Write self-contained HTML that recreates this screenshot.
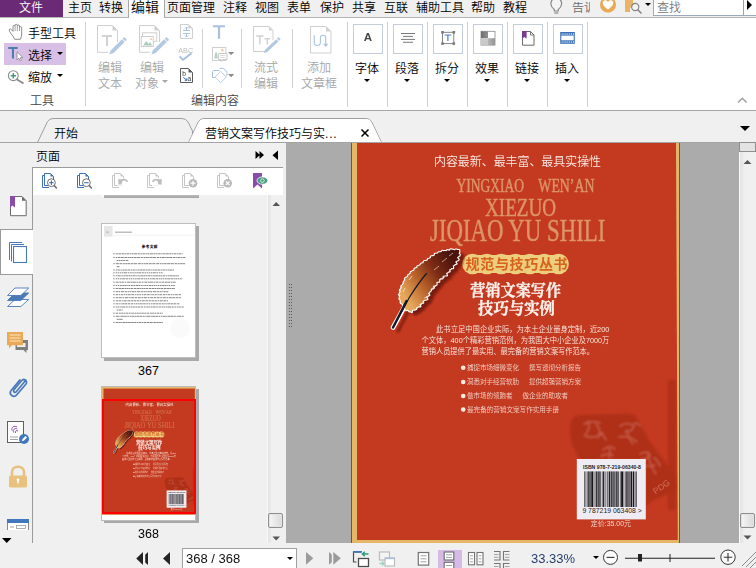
<!DOCTYPE html>
<html lang="zh-CN"><head><meta charset="utf-8"><title>营销文案写作技巧与实例</title>
<style>
*{box-sizing:border-box;margin:0;padding:0}
html,body{width:756px;height:568px;overflow:hidden}
body{position:relative;background:#f0f0f0;font-family:"Liberation Sans","Noto Sans CJK SC",sans-serif;font-size:12px;color:#000;line-height:1;font-weight:350}
.a{position:absolute}
.t{position:absolute;white-space:nowrap;line-height:12px;height:12px}
.g{color:#a6a6a6}
svg{position:absolute;overflow:visible}
.vs{position:absolute;width:1px;background:#d0d0d0}
.box{position:absolute;width:30px;height:30px;top:24px;border:1px solid #c3ced9;background:#fff}
.arr{position:absolute;width:0;height:0;border-left:3px solid transparent;border-right:3px solid transparent;border-top:3px solid #000}
</style></head><body>

<!-- ================= MENU BAR ================= -->
<div id="menubar" class="a" style="left:0;top:0;width:756px;height:17px;background:#f0f0f0"></div>
<div class="a" style="left:0;top:17px;width:756px;height:1px;background:#b4b4b4"></div>
<div class="a" style="left:0;top:0;width:63px;height:17px;background:#6b2a75"></div>
<div class="t" style="left:19px;top:2px;color:#fff">文件</div>
<div class="t" style="left:68px;top:2px">主页</div>
<div class="t" style="left:99px;top:2px">转换</div>
<div class="a" style="left:128px;top:-2px;width:37px;height:21px;background:#fff;border:1px solid #a8a8a8;border-bottom:none"></div>
<div class="t" style="left:131px;top:0px;font-size:14px;line-height:14px;height:14px">编辑</div>
<div class="t" style="left:167px;top:2px">页面管理</div>
<div class="t" style="left:223px;top:2px">注释</div>
<div class="t" style="left:255px;top:2px">视图</div>
<div class="t" style="left:287px;top:2px">表单</div>
<div class="t" style="left:320px;top:2px">保护</div>
<div class="t" style="left:352px;top:2px">共享</div>
<div class="t" style="left:384px;top:2px">互联</div>
<div class="t" style="left:416px;top:2px">辅助工具</div>
<div class="t" style="left:471px;top:2px">帮助</div>
<div class="t" style="left:503px;top:2px">教程</div>
<div class="t" style="left:572px;top:2px;color:#6a6a6a;width:18px;overflow:hidden">告诉</div>
<!-- search -->
<div class="a" style="left:653px;top:-1px;width:104px;height:17px;background:#fff;border:1px solid #9aa9bb"></div>
<div class="a" style="left:743px;top:0;width:1px;height:15px;background:#8fa3bb"></div>
<div class="t" style="left:657px;top:2px;color:#767676">查找</div>
<div class="a" style="left:747px;top:0;width:0;height:0;border-top:5px solid transparent;border-bottom:5px solid transparent;border-left:5px solid #000"></div>
<div class="arr" style="left:645px;top:3px"></div>
<!--ICONS_MENU-->

<!-- ================= RIBBON ================= -->
<div id="ribbon" class="a" style="left:0;top:18px;width:756px;height:92px;background:#fff"></div>
<div class="a" style="left:0;top:110px;width:756px;height:1px;background:#a6a6a6"></div>
<div class="a" style="left:129px;top:17px;width:35px;height:2px;background:#fff"></div>

<div class="t" style="left:28px;top:28px">手型工具</div>
<div class="a" style="left:4px;top:43px;width:62px;height:21.500px;background:#d8bfe6"></div>
<div class="t" style="left:28px;top:50px">选择</div>
<div class="arr" style="left:57px;top:52px"></div>
<div class="t" style="left:28px;top:72px">缩放</div>
<div class="arr" style="left:57px;top:74px"></div>
<div class="t" style="left:30px;top:95px;color:#444">工具</div>
<div class="vs" style="left:85px;top:22px;height:84px"></div>

<div class="t g" style="left:98px;top:62px">编辑</div>
<div class="t g" style="left:98px;top:78px">文本</div>
<div class="t g" style="left:140px;top:62px">编辑</div>
<div class="t g" style="left:135px;top:78px">对象</div>
<div class="arr" style="left:162px;top:80px;border-top-color:#a6a6a6"></div>
<div class="vs" style="left:202px;top:29px;height:59px"></div>
<div class="arr" style="left:228px;top:52px;border-top-color:#8c8c8c"></div>
<div class="arr" style="left:228px;top:74px;border-top-color:#8c8c8c"></div>
<div class="vs" style="left:241px;top:29px;height:59px"></div>
<div class="t g" style="left:254px;top:62px">流式</div>
<div class="t g" style="left:254px;top:78px">编辑</div>
<div class="vs" style="left:292px;top:29px;height:59px"></div>
<div class="t g" style="left:307px;top:62px">添加</div>
<div class="t g" style="left:301px;top:78px">文章框</div>
<div class="t" style="left:191px;top:95px;color:#444">编辑内容</div>
<div class="vs" style="left:347px;top:22px;height:85px"></div>

<div class="box" style="left:353px"></div>
<div class="t" style="left:355px;top:63px">字体</div>
<div class="arr" style="left:364px;top:79px"></div>
<div class="vs" style="left:387px;top:22px;height:85px"></div>
<div class="box" style="left:393px"></div>
<div class="t" style="left:395px;top:63px">段落</div>
<div class="arr" style="left:404px;top:79px"></div>
<div class="vs" style="left:427px;top:22px;height:85px"></div>
<div class="box" style="left:433px"></div>
<div class="t" style="left:435px;top:63px">拆分</div>
<div class="arr" style="left:444px;top:79px"></div>
<div class="vs" style="left:467px;top:22px;height:85px"></div>
<div class="box" style="left:473px"></div>
<div class="t" style="left:475px;top:63px">效果</div>
<div class="arr" style="left:484px;top:79px"></div>
<div class="vs" style="left:507px;top:22px;height:85px"></div>
<div class="box" style="left:513px"></div>
<div class="t" style="left:515px;top:63px">链接</div>
<div class="arr" style="left:524px;top:79px"></div>
<div class="vs" style="left:547px;top:22px;height:85px"></div>
<div class="box" style="left:553px"></div>
<div class="t" style="left:555px;top:63px">插入</div>
<div class="arr" style="left:564px;top:79px"></div>
<div class="vs" style="left:587px;top:22px;height:85px"></div>
<!--ICONS_RIBBON-->

<!-- ================= TAB BAR ================= -->

<svg class="a" style="left:0;top:111px" width="756" height="32" viewBox="0 111 756 32">
  <path d="M37.5 142.5 L47.5 121.5 Q49.5 118.500 53 118.500 L182 118.500 Q186 118.500 188 122 L192.500 131 L192.500 142.500 Z" fill="#f0f0f0" stroke="#9e9e9e" stroke-width="1"/>
  <path d="M0 142.500 L188.500 142.500 L198.500 121.500 Q200.500 118.500 204 118.500 L366 118.500 Q370 118.500 371.500 121.500 L381.500 142.500 L756 142.500" fill="none" stroke="#9e9e9e" stroke-width="1"/>
  <path d="M189 142 L199 121.800 Q200.800 119 204 119 L366 119 Q369.500 119 371 121.800 L381 142 Z" fill="#fff"/><path d="M0 142.500 L756 142.500" stroke="#a4a4a4" stroke-width="1" fill="none"/>
  <path d="M361.500 129.500 L368.500 136.500 M368.500 129.500 L361.500 136.500" stroke="#000" stroke-width="1.500" fill="none"/>
  <path d="M740 126 L750 126 L745 131 Z" fill="#000"/>
</svg>
<div class="t" style="left:54px;top:128px">开始</div>
<div class="t" style="left:205px;top:128px">营销文案写作技巧与实<span style="letter-spacing:0.800px">...</span></div>


<!-- ================= LEFT PANEL ================= -->

<div class="a" style="left:0;top:143px;width:286px;height:400px;background:#f0f0f0"></div>
<div class="t" style="left:36px;top:151px">页面</div>
<svg style="left:254px;top:150px" width="26" height="11" viewBox="254 150 26 11"><path d="M255.500 151 L260 155 L255.500 159 Z M259.500 151 L264 155 L259.500 159 Z M278 150.500 L278 160 L272.500 155.200 Z" fill="#000"/></svg>
<!-- toolbar -->
<div class="a" style="left:32px;top:167px;width:251px;height:28px;background:#fff;border-top:1px solid #9b9b9b"></div>
<div class="a" style="left:32px;top:167px;width:1px;height:376px;background:#9b9b9b"></div>
<!-- selected side tab -->
<div class="a" style="left:0;top:229px;width:33px;height:46px;background:#fff;border:1px solid #9b9b9b;border-right:none"></div>
<!-- thumbs scrollbar -->
<div class="a" style="left:267px;top:195px;width:16px;height:348px;background:linear-gradient(90deg,#f9f9f9 0,#f9f9f9 1px,#e4e4e4 1.500px,#f0f0f0 5px,#f0f0f0)"></div>
<svg style="left:268px;top:195px" width="15" height="347" viewBox="268 195 15 347">
  <path d="M272.500 206 L276.200 202 L280 206 Z" fill="#555"/>
  <path d="M272.500 536.500 L280 536.500 L276.200 540.500 Z" fill="#555"/>
  <rect x="268.500" y="513.500" width="14" height="14" rx="1.500" fill="#e4e4e4" stroke="#8e8e8e"/>
</svg>
<div class="a" style="left:270px;top:515px;width:11px;height:11px;background:linear-gradient(90deg,#f4f4f4,#dcdcdc)"></div>
<!-- prev thumb bottom shadow -->
<div class="a" style="left:104px;top:195px;width:95px;height:2.800px;background:linear-gradient(#bdbdbd,#a2a2a2)"></div><div class="a" style="left:102px;top:195px;width:2px;height:1.500px;background:#fafafa"></div>
<!-- thumb 367 -->
<div class="a" style="left:104px;top:226px;width:95px;height:135px;background:#a9a9a9"></div>
<div id="th367" class="a" style="left:101px;top:223px;width:95px;height:135px;background:#fff;border:1px solid #bdbdbd;overflow:hidden">
<svg style="left:0;top:0" width="95" height="135" viewBox="102 224 95 135" font-family="Liberation Sans,Noto Sans CJK SC,sans-serif">
<defs><filter id="tbl"><feGaussianBlur stdDeviation="0.3"/></filter></defs>
<rect x="104" y="226" width="8.500" height="10.700" fill="#e6e6e6"/>
<rect x="106" y="231.500" width="3" height="1.300" fill="#bdbdbd"/>
<rect x="115" y="231.600" width="17" height="1.200" fill="#b0b0b0"/>
<rect x="113" y="234.800" width="82" height="0.600" fill="#e8e8e8"/>
<g transform="translate(141.700 247.700) scale(0.25)"><text x="0" y="0" font-family="Liberation Sans,Noto Sans CJK SC,sans-serif" font-weight="900" font-size="14.500" textLength="63.200" lengthAdjust="spacing" fill="#111">参考文献</text></g>
<g filter="url(#tbl)">
<rect x="113.3" y="253.2" width="1.300" height="1.100" fill="#888"/>
<path d="M115.7 253.80 L182.5 253.80" stroke="#868686" stroke-width="1" stroke-dasharray="2.1 0.5 3.0 0.5 2.2 0.5 1.6 0.5 2.5 0.6 1.4 0.4" fill="none"/>
<rect x="113.3" y="256.9" width="1.300" height="1.100" fill="#888"/>
<path d="M115.7 257.50 L185.8 257.50" stroke="#868686" stroke-width="1" stroke-dasharray="1.4 0.6 2.6 0.3 3.2 0.7 2.5 0.5 1.5 0.3 2.3 0.3" fill="none"/>
<path d="M116.7 260.50 L129.0 260.50" stroke="#868686" stroke-width="1" stroke-dasharray="1.6 0.4 1.3 0.5 2.1 0.6 2.2 0.6 2.2 0.6 2.1 0.4" fill="none"/>
<rect x="113.3" y="263.1" width="1.300" height="1.100" fill="#888"/>
<path d="M115.7 263.70 L185.0 263.70" stroke="#868686" stroke-width="1" stroke-dasharray="3.2 0.7 2.9 0.6 1.8 0.4 1.8 0.3 2.7 0.5 2.9 0.5" fill="none"/>
<path d="M116.7 266.70 L119.5 266.70" stroke="#868686" stroke-width="1" stroke-dasharray="3.1 0.6 1.2 0.4 3.0 0.5 3.2 0.5 1.3 0.6 2.8 0.4" fill="none"/>
<rect x="113.3" y="269.4" width="1.300" height="1.100" fill="#888"/>
<path d="M115.7 270.00 L174.0 270.00" stroke="#868686" stroke-width="1" stroke-dasharray="1.4 0.4 3.1 0.6 1.4 0.4 1.4 0.3 2.8 0.4 2.3 0.5" fill="none"/>
<rect x="113.3" y="272.2" width="1.300" height="1.100" fill="#888"/>
<path d="M115.7 272.80 L163.0 272.80" stroke="#868686" stroke-width="1" stroke-dasharray="1.6 0.6 1.5 0.6 1.4 0.5 1.6 0.4 3.1 0.6 1.8 0.7" fill="none"/>
<rect x="113.3" y="275.2" width="1.300" height="1.100" fill="#888"/>
<path d="M115.7 275.80 L179.0 275.80" stroke="#868686" stroke-width="1" stroke-dasharray="1.6 0.5 2.9 0.6 1.4 0.7 1.6 0.4 2.7 0.4 1.8 0.3" fill="none"/>
<rect x="113.3" y="278.2" width="1.300" height="1.100" fill="#888"/>
<path d="M115.7 278.80 L182.5 278.80" stroke="#868686" stroke-width="1" stroke-dasharray="1.4 0.5 1.7 0.5 1.9 0.5 3.1 0.5 2.3 0.6 1.6 0.4" fill="none"/>
<rect x="113.3" y="281.6" width="1.300" height="1.100" fill="#888"/>
<path d="M115.7 282.20 L176.0 282.20" stroke="#868686" stroke-width="1" stroke-dasharray="3.0 0.6 1.7 0.4 2.7 0.7 1.6 0.7 3.0 0.5 2.0 0.3" fill="none"/>
<rect x="113.3" y="284.9" width="1.300" height="1.100" fill="#888"/>
<path d="M115.7 285.50 L175.0 285.50" stroke="#868686" stroke-width="1" stroke-dasharray="1.3 0.7 1.7 0.6 1.7 0.6 2.4 0.4 1.6 0.6 1.3 0.4" fill="none"/>
<rect x="113.3" y="287.9" width="1.300" height="1.100" fill="#888"/>
<path d="M115.7 288.50 L175.0 288.50" stroke="#868686" stroke-width="1" stroke-dasharray="2.3 0.6 2.4 0.4 3.0 0.4 1.2 0.4 2.1 0.3 1.6 0.4" fill="none"/>
<rect x="113.3" y="291.1" width="1.300" height="1.100" fill="#888"/>
<path d="M115.7 291.70 L169.0 291.70" stroke="#868686" stroke-width="1" stroke-dasharray="2.3 0.4 1.9 0.7 3.2 0.6 2.6 0.5 1.5 0.3 1.2 0.7" fill="none"/>
<rect x="113.3" y="294.1" width="1.300" height="1.100" fill="#888"/>
<path d="M115.7 294.70 L181.0 294.70" stroke="#868686" stroke-width="1" stroke-dasharray="2.6 0.7 1.2 0.6 2.2 0.6 1.8 0.7 1.4 0.5 2.7 0.7" fill="none"/>
<rect x="113.3" y="297.1" width="1.300" height="1.100" fill="#888"/>
<path d="M115.7 297.70 L181.0 297.70" stroke="#868686" stroke-width="1" stroke-dasharray="2.7 0.6 2.8 0.7 1.9 0.6 3.0 0.6 2.0 0.6 2.9 0.5" fill="none"/>
<rect x="113.3" y="300.2" width="1.300" height="1.100" fill="#888"/>
<path d="M115.7 300.80 L168.0 300.80" stroke="#868686" stroke-width="1" stroke-dasharray="2.4 0.5 2.4 0.5 1.4 0.6 3.2 0.7 2.7 0.5 2.7 0.5" fill="none"/>
<rect x="113.3" y="303.2" width="1.300" height="1.100" fill="#888"/>
<path d="M115.7 303.80 L180.0 303.80" stroke="#868686" stroke-width="1" stroke-dasharray="2.1 0.6 1.4 0.6 1.3 0.5 2.2 0.4 2.6 0.5 2.4 0.7" fill="none"/>
<rect x="113.3" y="306.4" width="1.300" height="1.100" fill="#888"/>
<path d="M115.7 307.00 L184.0 307.00" stroke="#868686" stroke-width="1" stroke-dasharray="1.7 0.3 1.8 0.6 1.6 0.4 3.0 0.6 2.1 0.7 1.9 0.6" fill="none"/>
<path d="M116.7 310.00 L123.0 310.00" stroke="#868686" stroke-width="1" stroke-dasharray="1.6 0.5 2.8 0.7 3.0 0.5 2.4 0.4 1.5 0.5 2.9 0.6" fill="none"/>
<rect x="113.3" y="312.6" width="1.300" height="1.100" fill="#888"/>
<path d="M115.7 313.20 L163.0 313.20" stroke="#868686" stroke-width="1" stroke-dasharray="2.6 0.7 1.8 0.4 2.1 0.4 1.6 0.5 2.5 0.5 1.8 0.6" fill="none"/>
<rect x="113.3" y="315.7" width="1.300" height="1.100" fill="#888"/>
<path d="M115.7 316.30 L184.0 316.30" stroke="#868686" stroke-width="1" stroke-dasharray="3.2 0.5 1.3 0.3 2.9 0.3 2.6 0.5 1.8 0.6 1.2 0.4" fill="none"/>
<path d="M116.7 319.30 L123.0 319.30" stroke="#868686" stroke-width="1" stroke-dasharray="2.1 0.3 2.9 0.4 1.5 0.3 2.5 0.5 2.5 0.6 2.8 0.7" fill="none"/>
<rect x="113.3" y="321.9" width="1.300" height="1.100" fill="#888"/>
<path d="M115.7 322.50 L163.0 322.50" stroke="#868686" stroke-width="1" stroke-dasharray="2.6 0.4 2.2 0.4 1.2 0.5 2.6 0.4 1.7 0.4 2.6 0.5" fill="none"/>
</g>
<circle cx="180" cy="328" r="10" fill="#fafafa"/>
</svg>
</div>
<div class="t" style="left:138px;top:365px;font-size:12.500px">367</div>
<!-- thumb 368 -->
<div class="a" style="left:104px;top:389px;width:95px;height:134px;background:#a9a9a9"></div>
<div id="th368" class="a" style="left:101px;top:386px;width:95px;height:135px;background:#fff;border:1px solid #bdbdbd;overflow:hidden">
<svg style="left:0;top:0" width="95" height="135" viewBox="102 387 95 135" font-family="Liberation Sans,Noto Sans CJK SC,sans-serif">
<rect x="102" y="387" width="94" height="127.500" fill="#c23a20"/>
<rect x="102" y="387" width="94" height="1.600" fill="#e6b667"/>
<rect x="102" y="387" width="1.500" height="127.500" fill="#e6b667"/>
<rect x="194.800" y="387" width="1.200" height="127.500" fill="#e6b667"/>
<svg x="102" y="399.800" width="94" height="114.700" viewBox="352 143 327 400" preserveAspectRatio="none"><defs><linearGradient id="tfg" x1="452" y1="258" x2="402" y2="292" gradientUnits="userSpaceOnUse"><stop offset="0" stop-color="#4a130c"/><stop offset="0.35" stop-color="#7e2c14"/><stop offset="0.65" stop-color="#b7602a"/><stop offset="1" stop-color="#e6a85a"/></linearGradient><filter id="tbl" x="-20%" y="-20%" width="140%" height="140%"><feGaussianBlur stdDeviation="0.8"/></filter><filter id="tbl2" x="-20%" y="-20%" width="140%" height="140%"><feGaussianBlur stdDeviation="1.6"/></filter><filter id="ttb"><feGaussianBlur stdDeviation="0.35"/></filter></defs>
<rect x="352" y="143" width="327" height="400" fill="#c43a20"/>
<rect x="352" y="143" width="5" height="400" fill="#e6b667"/>
<path d="M676 143 L679 143 L679 543 L677.800 543 Z" fill="#e6b667"/>
<rect x="352" y="540" width="327" height="3" fill="#e6b667"/>
<rect x="668" y="380" width="8" height="130" fill="#a32c18" opacity="0.55" filter="url(#tbl)"/>
<g filter="url(#tbl)"><path d="M570.500 426 Q570.500 416 580 415 L628 413.500 Q635 413.500 638 420 L650 442 L674 474 Q677 482 675.500 491 L652 501 L646 506 L646 459 L580 459 Q571 446 570.500 436 Z" fill="#ae2f19" opacity="0.95"/><g fill="none" stroke="#c9614b" stroke-width="1.500" stroke-linecap="round" opacity="0.9"><path d="M584 424 q8 -4 16 -1 M588 421 q3 8 -3 14 M596 424 q6 6 2 14 M585 436 q10 3 18 -3 M600 432 q4 4 6 8"/><path d="M620 426 q8 -5 14 0 q-2 6 -9 6 M619 437 q10 -2 18 5 M627 430 q1 8 6 14 M634 424 q4 -2 6 2"/><path d="M603 450 q6 -6 12 -1 M601 456 q5 -3 12 -1 M609 448 q2 6 0 10"/><path d="M640 454 q6 -4 10 1 q-3 5 -9 4 M642 464 q6 4 13 1 M648 452 q1 12 8 22 M654 458 q4 2 6 8"/></g></g>
<text transform="translate(655.500 494.500) rotate(-35)" font-family="Liberation Sans,sans-serif" font-size="8.500" fill="#d0705c">PDG</text>
<g filter="url(#ttb)">
<text x="434" y="165.600" font-size="12" textLength="167" lengthAdjust="spacingAndGlyphs" fill="#fbeee8">内容最新、最丰富、最具实操性</text>
<text x="456.400" y="191.500" font-size="19" textLength="67.600" font-family="Liberation Serif,serif" fill="#dc9468" stroke="#dc9468" stroke-width="0.450" lengthAdjust="spacingAndGlyphs" opacity="0.6">YINGXIAO</text>
<text x="538.300" y="191.500" font-size="19" textLength="56.200" font-family="Liberation Serif,serif" fill="#dc9468" stroke="#dc9468" stroke-width="0.450" lengthAdjust="spacingAndGlyphs" opacity="0.6">WEN’AN</text>
<text x="485" y="215.600" font-size="25" textLength="71" font-family="Liberation Serif,serif" fill="#dc9468" stroke="#dc9468" stroke-width="0.450" lengthAdjust="spacingAndGlyphs" opacity="0.6">XIEZUO</text>
<text x="430" y="240.600" font-size="30.500" textLength="175.300" font-family="Liberation Serif,serif" fill="#dc9468" stroke="#dc9468" stroke-width="0.450" lengthAdjust="spacingAndGlyphs" opacity="0.6">JIQIAO YU SHILI</text>
<g fill="#ecce7e"><circle cx="472.50" cy="264" r="10.300"/><circle cx="486.85" cy="264" r="10.300"/><circle cx="501.20" cy="264" r="10.300"/><circle cx="515.55" cy="264" r="10.300"/><circle cx="529.90" cy="264" r="10.300"/><circle cx="544.25" cy="264" r="10.300"/><circle cx="558.60" cy="264" r="10.300"/><rect x="472" y="255" width="86" height="18"/></g>
<text x="465.600" y="269.300" font-size="14" font-weight="bold" textLength="102" lengthAdjust="spacing" fill="#d8621c">规范与技巧丛书</text>
<text x="470.300" y="295.800" font-size="16.200" textLength="90.700" font-family="Liberation Serif,Noto Serif CJK SC,serif" font-weight="700" fill="#fdf3ee" stroke="#fdf3ee" stroke-width="0.300" lengthAdjust="spacingAndGlyphs">营销文案写作</text>
<text x="478" y="314.300" font-size="15.500" textLength="77" font-family="Liberation Serif,Noto Serif CJK SC,serif" font-weight="700" fill="#fdf3ee" stroke="#fdf3ee" stroke-width="0.300" lengthAdjust="spacingAndGlyphs">技巧与实例</text>
<text x="436" y="331.700" textLength="173.300" font-size="7.600" fill="#fbe9e2" lengthAdjust="spacingAndGlyphs">此书立足中国企业实际，为本土企业量身定制，近200</text>
<text x="421.600" y="343.200" textLength="187.700" font-size="7.600" fill="#fbe9e2" lengthAdjust="spacingAndGlyphs">个文体，400个精彩营销范例，为我国大中小企业及7000万</text>
<text x="421.600" y="353.900" textLength="172.400" font-size="7.600" fill="#fbe9e2" lengthAdjust="spacingAndGlyphs">营销人员提供了最实用、最完备的营销文案写作范本。</text>
<circle cx="463.200" cy="367.8" r="2.300" fill="#fbe9e2"/>
<circle cx="463.200" cy="382.0" r="2.300" fill="#fbe9e2"/>
<circle cx="463.200" cy="396.0" r="2.300" fill="#fbe9e2"/>
<circle cx="463.200" cy="409.5" r="2.300" fill="#fbe9e2"/>
<text x="467" y="370.2" textLength="52" font-size="6.600" fill="#f3cfc5" lengthAdjust="spacingAndGlyphs">捕捉市场细微变化</text><text x="529" y="370.2" textLength="52" font-size="6.600" fill="#f3cfc5" lengthAdjust="spacingAndGlyphs">撰写透彻分析报告</text>
<text x="467" y="384.4" textLength="52" font-size="6.600" fill="#f3cfc5" lengthAdjust="spacingAndGlyphs">洞悉对手经营软肋</text><text x="529" y="384.4" textLength="52" font-size="6.600" fill="#f3cfc5" lengthAdjust="spacingAndGlyphs">提供超强营销方案</text>
<text x="467" y="398.4" textLength="45.500" font-size="6.600" fill="#f3cfc5" lengthAdjust="spacingAndGlyphs">做市场的领跑者</text><text x="522.500" y="398.4" textLength="45.500" font-size="6.600" fill="#f3cfc5" lengthAdjust="spacingAndGlyphs">做企业的助攻者</text>
<text x="467" y="411.9" textLength="92" font-size="6.600" fill="#f3cfc5" lengthAdjust="spacingAndGlyphs">最完备的营销文案写作实用手册</text>
</g>
<g transform="translate(5 4)" filter="url(#tbl)" opacity="0.85"><path d="M459.2 250.1 L458.9 250.1 L458.6 250.1 L458.2 250.1 L457.7 249.9 L457.2 249.8 L456.7 249.8 L456.2 249.6 L455.6 249.6 L455.0 250.2 L454.4 250.2 L453.7 250.0 L452.9 249.7 L452.2 249.8 L451.4 249.4 L450.6 249.3 L450.0 250.7 L449.1 250.4 L448.2 250.4 L447.2 250.2 L446.4 251.3 L445.4 251.1 L444.4 251.1 L443.4 251.2 L442.2 250.8 L441.5 252.0 L440.5 252.2 L439.5 252.3 L438.5 252.3 L438.0 253.5 L436.9 253.5 L436.0 253.8 L434.9 253.8 L434.8 255.5 L433.9 255.8 L433.0 256.2 L431.9 256.2 L431.0 256.6 L430.8 258.0 L429.9 258.4 L429.0 258.7 L428.0 259.0 L427.8 260.3 L426.8 260.7 L425.8 260.9 L424.7 261.0 L423.8 261.4 L423.6 262.9 L422.7 263.3 L421.7 263.5 L420.8 264.1 L420.5 265.3 L419.4 265.6 L418.6 266.1 L417.5 266.3 L417.4 267.7 L416.4 268.0 L415.4 268.4 L414.5 268.8 L414.5 270.3 L413.6 270.7 L412.6 271.1 L411.8 271.7 L410.7 272.0 L410.8 273.5 L409.9 274.0 L409.2 274.7 L408.3 275.1 L408.2 276.3 L407.5 277.0 L406.6 277.4 L405.8 278.0 L404.9 278.6 L405.5 280.1 L404.7 280.7 L404.3 281.6 L403.6 282.3 L403.8 283.4 L403.2 284.2 L402.7 284.9 L402.2 285.6 L401.3 286.2 L402.0 287.4 L401.3 288.1 L400.9 288.8 L400.5 289.5 L399.9 290.1 L401.0 291.2 L400.5 291.8 L400.1 292.5 L399.8 293.2 L399.6 293.9 L399.0 294.6 L400.4 295.3 L400.2 296.0 L399.9 296.6 L399.8 297.3 L399.8 298.0 L399.5 298.7 L399.8 299.3 L400.8 299.8 L400.7 300.5 L400.7 301.3 L400.7 302.1 L400.8 302.8 L401.3 303.4 L402.5 303.4 L402.7 304.0 L402.9 304.6 L403.2 305.0 L403.5 305.4 L403.8 305.7 L404.0 306.0 L404.0 306.0 L404.2 306.2 L404.5 306.5 L404.7 306.8 L404.9 307.3 L405.1 307.8 L405.2 308.5 L405.5 309.1 L405.8 309.7 L406.3 310.2 L407.6 309.3 L407.9 310.0 L408.3 310.3 L408.9 310.5 L409.3 311.4 L410.0 311.1 L410.5 311.4 L411.1 311.4 L411.9 312.0 L411.9 309.7 L412.5 309.8 L413.0 309.7 L413.7 309.7 L414.3 309.6 L415.0 309.5 L415.6 309.2 L416.3 309.0 L416.1 307.5 L416.9 307.5 L417.4 307.0 L418.1 306.5 L419.0 306.3 L420.4 306.4 L419.5 304.4 L420.2 303.8 L421.3 303.6 L421.8 302.8 L423.2 302.7 L422.4 300.9 L423.5 300.5 L424.1 299.9 L425.3 299.7 L426.4 299.4 L427.4 299.1 L425.7 296.8 L426.6 296.4 L427.8 296.2 L428.0 295.3 L429.3 295.2 L427.8 293.3 L428.7 292.8 L429.3 292.3 L429.6 291.5 L430.4 291.0 L431.0 290.5 L430.5 289.2 L431.6 289.0 L432.2 288.5 L433.3 288.3 L433.8 287.7 L432.9 285.9 L433.8 285.6 L434.8 285.4 L435.7 285.1 L436.5 284.8 L436.6 283.7 L436.3 282.3 L437.0 281.8 L438.1 281.7 L439.2 281.6 L439.3 280.5 L439.2 279.1 L440.1 278.8 L440.9 278.4 L442.2 278.5 L442.8 277.8 L442.5 276.0 L443.5 275.7 L444.5 275.5 L445.8 275.5 L446.9 275.3 L445.9 272.9 L447.0 272.7 L447.8 272.1 L448.5 271.5 L449.6 271.3 L449.0 269.6 L450.1 269.3 L450.8 268.7 L451.4 268.0 L453.1 268.2 L453.0 267.0 L452.7 265.6 L453.8 265.3 L454.4 264.6 L455.2 264.1 L456.5 263.8 L454.9 261.8 L455.9 261.4 L456.5 260.7 L458.0 260.3 L458.7 259.5 L456.9 257.7 L457.6 256.9 L458.4 256.2 L459.5 255.5 L459.7 254.6 L458.4 253.3 L459.0 252.6 L459.3 251.9 L459.2 251.2 L459.3 250.6 L459.2 250.1 Z" fill="#6a140a"/><path d="M406.500 301 C403 308 398 318 393 327.500" fill="none" stroke="#6a140a" stroke-width="2.400" stroke-linecap="round"/></g>
<path d="M459.2 250.1 L458.9 250.1 L458.6 250.1 L458.2 250.1 L457.7 249.9 L457.2 249.8 L456.7 249.8 L456.2 249.6 L455.6 249.6 L455.0 250.2 L454.4 250.2 L453.7 250.0 L452.9 249.7 L452.2 249.8 L451.4 249.4 L450.6 249.3 L450.0 250.7 L449.1 250.4 L448.2 250.4 L447.2 250.2 L446.4 251.3 L445.4 251.1 L444.4 251.1 L443.4 251.2 L442.2 250.8 L441.5 252.0 L440.5 252.2 L439.5 252.3 L438.5 252.3 L438.0 253.5 L436.9 253.5 L436.0 253.8 L434.9 253.8 L434.8 255.5 L433.9 255.8 L433.0 256.2 L431.9 256.2 L431.0 256.6 L430.8 258.0 L429.9 258.4 L429.0 258.7 L428.0 259.0 L427.8 260.3 L426.8 260.7 L425.8 260.9 L424.7 261.0 L423.8 261.4 L423.6 262.9 L422.7 263.3 L421.7 263.5 L420.8 264.1 L420.5 265.3 L419.4 265.6 L418.6 266.1 L417.5 266.3 L417.4 267.7 L416.4 268.0 L415.4 268.4 L414.5 268.8 L414.5 270.3 L413.6 270.7 L412.6 271.1 L411.8 271.7 L410.7 272.0 L410.8 273.5 L409.9 274.0 L409.2 274.7 L408.3 275.1 L408.2 276.3 L407.5 277.0 L406.6 277.4 L405.8 278.0 L404.9 278.6 L405.5 280.1 L404.7 280.7 L404.3 281.6 L403.6 282.3 L403.8 283.4 L403.2 284.2 L402.7 284.9 L402.2 285.6 L401.3 286.2 L402.0 287.4 L401.3 288.1 L400.9 288.8 L400.5 289.5 L399.9 290.1 L401.0 291.2 L400.5 291.8 L400.1 292.5 L399.8 293.2 L399.6 293.9 L399.0 294.6 L400.4 295.3 L400.2 296.0 L399.9 296.6 L399.8 297.3 L399.8 298.0 L399.5 298.7 L399.8 299.3 L400.8 299.8 L400.7 300.5 L400.7 301.3 L400.7 302.1 L400.8 302.8 L401.3 303.4 L402.5 303.4 L402.7 304.0 L402.9 304.6 L403.2 305.0 L403.5 305.4 L403.8 305.7 L404.0 306.0 L404.0 306.0 L404.2 306.2 L404.5 306.5 L404.7 306.8 L404.9 307.3 L405.1 307.8 L405.2 308.5 L405.5 309.1 L405.8 309.7 L406.3 310.2 L407.6 309.3 L407.9 310.0 L408.3 310.3 L408.9 310.5 L409.3 311.4 L410.0 311.1 L410.5 311.4 L411.1 311.4 L411.9 312.0 L411.9 309.7 L412.5 309.8 L413.0 309.7 L413.7 309.7 L414.3 309.6 L415.0 309.5 L415.6 309.2 L416.3 309.0 L416.1 307.5 L416.9 307.5 L417.4 307.0 L418.1 306.5 L419.0 306.3 L420.4 306.4 L419.5 304.4 L420.2 303.8 L421.3 303.6 L421.8 302.8 L423.2 302.7 L422.4 300.9 L423.5 300.5 L424.1 299.9 L425.3 299.7 L426.4 299.4 L427.4 299.1 L425.7 296.8 L426.6 296.4 L427.8 296.2 L428.0 295.3 L429.3 295.2 L427.8 293.3 L428.7 292.8 L429.3 292.3 L429.6 291.5 L430.4 291.0 L431.0 290.5 L430.5 289.2 L431.6 289.0 L432.2 288.5 L433.3 288.3 L433.8 287.7 L432.9 285.9 L433.8 285.6 L434.8 285.4 L435.7 285.1 L436.5 284.8 L436.6 283.7 L436.3 282.3 L437.0 281.8 L438.1 281.7 L439.2 281.6 L439.3 280.5 L439.2 279.1 L440.1 278.8 L440.9 278.4 L442.2 278.5 L442.8 277.8 L442.5 276.0 L443.5 275.7 L444.5 275.5 L445.8 275.5 L446.9 275.3 L445.9 272.9 L447.0 272.7 L447.8 272.1 L448.5 271.5 L449.6 271.3 L449.0 269.6 L450.1 269.3 L450.8 268.7 L451.4 268.0 L453.1 268.2 L453.0 267.0 L452.7 265.6 L453.8 265.3 L454.4 264.6 L455.2 264.1 L456.5 263.8 L454.9 261.8 L455.9 261.4 L456.5 260.7 L458.0 260.3 L458.7 259.5 L456.9 257.7 L457.6 256.9 L458.4 256.2 L459.5 255.5 L459.7 254.6 L458.4 253.3 L459.0 252.6 L459.3 251.9 L459.2 251.2 L459.3 250.6 L459.2 250.1 Z" fill="url(#tfg)" stroke="#fff" stroke-width="2.200" stroke-linejoin="round"/>
<path d="M426.500 273.500 C420 281 414 290 409 298 C405 306 399 317 393 327.500" fill="none" stroke="#fff" stroke-width="4.800" stroke-linecap="round"/>
<path d="M459.2 250.1 L458.9 250.1 L458.6 250.1 L458.2 250.1 L457.7 249.9 L457.2 249.8 L456.7 249.8 L456.2 249.6 L455.6 249.6 L455.0 250.2 L454.4 250.2 L453.7 250.0 L452.9 249.7 L452.2 249.8 L451.4 249.4 L450.6 249.3 L450.0 250.7 L449.1 250.4 L448.2 250.4 L447.2 250.2 L446.4 251.3 L445.4 251.1 L444.4 251.1 L443.4 251.2 L442.2 250.8 L441.5 252.0 L440.5 252.2 L439.5 252.3 L438.5 252.3 L438.0 253.5 L436.9 253.5 L436.0 253.8 L434.9 253.8 L434.8 255.5 L433.9 255.8 L433.0 256.2 L431.9 256.2 L431.0 256.6 L430.8 258.0 L429.9 258.4 L429.0 258.7 L428.0 259.0 L427.8 260.3 L426.8 260.7 L425.8 260.9 L424.7 261.0 L423.8 261.4 L423.6 262.9 L422.7 263.3 L421.7 263.5 L420.8 264.1 L420.5 265.3 L419.4 265.6 L418.6 266.1 L417.5 266.3 L417.4 267.7 L416.4 268.0 L415.4 268.4 L414.5 268.8 L414.5 270.3 L413.6 270.7 L412.6 271.1 L411.8 271.7 L410.7 272.0 L410.8 273.5 L409.9 274.0 L409.2 274.7 L408.3 275.1 L408.2 276.3 L407.5 277.0 L406.6 277.4 L405.8 278.0 L404.9 278.6 L405.5 280.1 L404.7 280.7 L404.3 281.6 L403.6 282.3 L403.8 283.4 L403.2 284.2 L402.7 284.9 L402.2 285.6 L401.3 286.2 L402.0 287.4 L401.3 288.1 L400.9 288.8 L400.5 289.5 L399.9 290.1 L401.0 291.2 L400.5 291.8 L400.1 292.5 L399.8 293.2 L399.6 293.9 L399.0 294.6 L400.4 295.3 L400.2 296.0 L399.9 296.6 L399.8 297.3 L399.8 298.0 L399.5 298.7 L399.8 299.3 L400.8 299.8 L400.7 300.5 L400.7 301.3 L400.7 302.1 L400.8 302.8 L401.3 303.4 L402.5 303.4 L402.7 304.0 L402.9 304.6 L403.2 305.0 L403.5 305.4 L403.8 305.7 L404.0 306.0 L404.0 306.0 L404.2 306.2 L404.5 306.5 L404.7 306.8 L404.9 307.3 L405.1 307.8 L405.2 308.5 L405.5 309.1 L405.8 309.7 L406.3 310.2 L407.6 309.3 L407.9 310.0 L408.3 310.3 L408.9 310.5 L409.3 311.4 L410.0 311.1 L410.5 311.4 L411.1 311.4 L411.9 312.0 L411.9 309.7 L412.5 309.8 L413.0 309.7 L413.7 309.7 L414.3 309.6 L415.0 309.5 L415.6 309.2 L416.3 309.0 L416.1 307.5 L416.9 307.5 L417.4 307.0 L418.1 306.5 L419.0 306.3 L420.4 306.4 L419.5 304.4 L420.2 303.8 L421.3 303.6 L421.8 302.8 L423.2 302.7 L422.4 300.9 L423.5 300.5 L424.1 299.9 L425.3 299.7 L426.4 299.4 L427.4 299.1 L425.7 296.8 L426.6 296.4 L427.8 296.2 L428.0 295.3 L429.3 295.2 L427.8 293.3 L428.7 292.8 L429.3 292.3 L429.6 291.5 L430.4 291.0 L431.0 290.5 L430.5 289.2 L431.6 289.0 L432.2 288.5 L433.3 288.3 L433.8 287.7 L432.9 285.9 L433.8 285.6 L434.8 285.4 L435.7 285.1 L436.5 284.8 L436.6 283.7 L436.3 282.3 L437.0 281.8 L438.1 281.7 L439.2 281.6 L439.3 280.5 L439.2 279.1 L440.1 278.8 L440.9 278.4 L442.2 278.5 L442.8 277.8 L442.5 276.0 L443.5 275.7 L444.5 275.5 L445.8 275.5 L446.9 275.3 L445.9 272.9 L447.0 272.7 L447.8 272.1 L448.5 271.5 L449.6 271.3 L449.0 269.6 L450.1 269.3 L450.8 268.7 L451.4 268.0 L453.1 268.2 L453.0 267.0 L452.7 265.6 L453.8 265.3 L454.4 264.6 L455.2 264.1 L456.5 263.8 L454.9 261.8 L455.9 261.4 L456.5 260.7 L458.0 260.3 L458.7 259.5 L456.9 257.7 L457.6 256.9 L458.4 256.2 L459.5 255.5 L459.7 254.6 L458.4 253.3 L459.0 252.6 L459.3 251.9 L459.2 251.2 L459.3 250.6 L459.2 250.1 Z" fill="url(#tfg)"/>
<path d="M426.500 273.500 C420 281 414 290 409 298 C405 306 399 317 393 327.500" fill="none" stroke="#151a26" stroke-width="1.200" stroke-linecap="round"/>
<path d="M406.500 301 C403 308 398 318 393 327.500" fill="none" stroke="#151a26" stroke-width="2.400" stroke-linecap="round"/>
<g stroke="#fff" stroke-width="0.700" opacity="0.8" fill="none"><path d="M449 256 l4 -3 M442 262 l5 -4 M434 270 l5 -4 M440 279 l5 -2 M431 289 l5 -3 M424 298 l4 -1 M412 276 l-3 4 M405 288 l-2 4"/></g>
<rect x="576.800" y="459" width="69" height="60.400" fill="#efecf3"/>
<text x="583" y="469.300" font-family="Liberation Sans,sans-serif" font-weight="bold" font-size="4.800" textLength="58" lengthAdjust="spacingAndGlyphs" fill="#222">ISBN 978-7-219-06340-8</text>
<g fill="#17171b"><rect x="584.40" y="471.400" width="0.62" height="35.600"/><rect x="585.65" y="471.400" width="0.62" height="35.600"/><rect x="587.51" y="471.400" width="1.25" height="35.600"/><rect x="589.38" y="471.400" width="1.25" height="35.600"/><rect x="591.25" y="471.400" width="1.87" height="35.600"/><rect x="593.74" y="471.400" width="0.62" height="35.600"/><rect x="595.61" y="471.400" width="1.25" height="35.600"/><rect x="597.48" y="471.400" width="1.25" height="35.600"/><rect x="599.34" y="471.400" width="1.25" height="35.600"/><rect x="601.83" y="471.400" width="0.62" height="35.600"/><rect x="603.08" y="471.400" width="1.25" height="35.600"/><rect x="605.57" y="471.400" width="0.62" height="35.600"/><rect x="607.44" y="471.400" width="0.62" height="35.600"/><rect x="608.68" y="471.400" width="1.25" height="35.600"/><rect x="610.55" y="471.400" width="1.25" height="35.600"/><rect x="612.42" y="471.400" width="1.25" height="35.600"/><rect x="614.29" y="471.400" width="0.62" height="35.600"/><rect x="615.53" y="471.400" width="1.25" height="35.600"/><rect x="617.40" y="471.400" width="1.25" height="35.600"/><rect x="619.89" y="471.400" width="0.62" height="35.600"/><rect x="621.13" y="471.400" width="1.87" height="35.600"/><rect x="623.62" y="471.400" width="0.62" height="35.600"/><rect x="625.49" y="471.400" width="1.25" height="35.600"/><rect x="627.36" y="471.400" width="1.25" height="35.600"/><rect x="629.23" y="471.400" width="0.62" height="35.600"/><rect x="630.47" y="471.400" width="1.87" height="35.600"/><rect x="632.96" y="471.400" width="1.25" height="35.600"/><rect x="634.83" y="471.400" width="0.62" height="35.600"/><rect x="636.08" y="471.400" width="0.62" height="35.600"/></g>
<text x="582.400" y="513" font-family="Liberation Sans,sans-serif" font-size="6.500" textLength="59.400" lengthAdjust="spacingAndGlyphs" fill="#222">9 787219 063408 &gt;</text>
<text x="590.800" y="526.400" font-size="7" textLength="40.200" lengthAdjust="spacingAndGlyphs" fill="#f6d8cf" filter="url(#ttb)">定价:35.00元</text></svg>
</svg>
</div>
<div id="redbox" class="a" style="left:101.500px;top:399.300px;width:94px;height:114.700px;border:2px solid #ff0000"></div>
<div class="t" style="left:138px;top:528px;font-size:12.500px">368</div>
<svg style="left:2px;top:538px" width="10" height="6" viewBox="0 0 10 6"><path d="M0 0 L9.500 0 L4.750 5 Z" fill="#000"/></svg>


<!-- ================= DOC ================= -->

<div class="a" style="left:286px;top:143px;width:453px;height:400px;background:#ababab"></div>
<!-- splitter dots -->
<svg style="left:0;top:0" width="756" height="568" viewBox="0 0 756 568"><g fill="#5c5c5c"><rect x="289" y="284" width="1" height="1"/><rect x="291" y="284" width="1" height="1"/><rect x="289" y="287" width="1" height="1"/><rect x="291" y="287" width="1" height="1"/><rect x="289" y="290" width="1" height="1"/><rect x="291" y="290" width="1" height="1"/><rect x="289" y="293" width="1" height="1"/><rect x="291" y="293" width="1" height="1"/><rect x="289" y="296" width="1" height="1"/><rect x="291" y="296" width="1" height="1"/><rect x="289" y="299" width="1" height="1"/><rect x="291" y="299" width="1" height="1"/><rect x="289" y="302" width="1" height="1"/><rect x="291" y="302" width="1" height="1"/><rect x="289" y="305" width="1" height="1"/><rect x="291" y="305" width="1" height="1"/><rect x="289" y="308" width="1" height="1"/><rect x="291" y="308" width="1" height="1"/><rect x="289" y="311" width="1" height="1"/><rect x="291" y="311" width="1" height="1"/><rect x="289" y="314" width="1" height="1"/><rect x="291" y="314" width="1" height="1"/><rect x="289" y="317" width="1" height="1"/><rect x="291" y="317" width="1" height="1"/><rect x="289" y="320" width="1" height="1"/><rect x="291" y="320" width="1" height="1"/><rect x="289" y="323" width="1" height="1"/><rect x="291" y="323" width="1" height="1"/><rect x="289" y="326" width="1" height="1"/><rect x="291" y="326" width="1" height="1"/></g></svg>
<!-- page -->
<div id="page" class="a" style="left:351px;top:143px;width:329px;height:400px;background:#c43a20;overflow:hidden;border-left:1px solid #5a5a5a;border-right:1px solid #5a5a5a">
<svg id="cover" style="left:0;top:0" width="327" height="400" viewBox="352 143 327 400" font-family="Liberation Sans,Noto Sans CJK SC,sans-serif"><defs><linearGradient id="fg" x1="452" y1="258" x2="402" y2="292" gradientUnits="userSpaceOnUse"><stop offset="0" stop-color="#4a130c"/><stop offset="0.35" stop-color="#7e2c14"/><stop offset="0.65" stop-color="#b7602a"/><stop offset="1" stop-color="#e6a85a"/></linearGradient><filter id="bl" x="-20%" y="-20%" width="140%" height="140%"><feGaussianBlur stdDeviation="0.8"/></filter><filter id="bl2" x="-20%" y="-20%" width="140%" height="140%"><feGaussianBlur stdDeviation="1.6"/></filter><filter id="tb"><feGaussianBlur stdDeviation="0.35"/></filter></defs>
<rect x="352" y="143" width="327" height="400" fill="#c43a20"/>
<rect x="352" y="143" width="5" height="400" fill="#e6b667"/>
<path d="M676 143 L679 143 L679 543 L677.800 543 Z" fill="#e6b667"/>
<rect x="352" y="540" width="327" height="3" fill="#e6b667"/>
<rect x="668" y="380" width="8" height="130" fill="#a32c18" opacity="0.55" filter="url(#bl)"/>
<g filter="url(#bl)"><path d="M570.500 426 Q570.500 416 580 415 L628 413.500 Q635 413.500 638 420 L650 442 L674 474 Q677 482 675.500 491 L652 501 L646 506 L646 459 L580 459 Q571 446 570.500 436 Z" fill="#ae2f19" opacity="0.95"/><g fill="none" stroke="#c9614b" stroke-width="1.500" stroke-linecap="round" opacity="0.9"><path d="M584 424 q8 -4 16 -1 M588 421 q3 8 -3 14 M596 424 q6 6 2 14 M585 436 q10 3 18 -3 M600 432 q4 4 6 8"/><path d="M620 426 q8 -5 14 0 q-2 6 -9 6 M619 437 q10 -2 18 5 M627 430 q1 8 6 14 M634 424 q4 -2 6 2"/><path d="M603 450 q6 -6 12 -1 M601 456 q5 -3 12 -1 M609 448 q2 6 0 10"/><path d="M640 454 q6 -4 10 1 q-3 5 -9 4 M642 464 q6 4 13 1 M648 452 q1 12 8 22 M654 458 q4 2 6 8"/></g></g>
<text transform="translate(655.500 494.500) rotate(-35)" font-family="Liberation Sans,sans-serif" font-size="8.500" fill="#d0705c">PDG</text>
<g filter="url(#tb)">
<text x="434" y="165.600" font-size="12" textLength="167" lengthAdjust="spacingAndGlyphs" fill="#fbeee8">内容最新、最丰富、最具实操性</text>
<text x="456.400" y="191.500" font-size="19" textLength="67.600" font-family="Liberation Serif,serif" fill="#dc9468" stroke="#dc9468" stroke-width="0.450" lengthAdjust="spacingAndGlyphs" opacity="1">YINGXIAO</text>
<text x="538.300" y="191.500" font-size="19" textLength="56.200" font-family="Liberation Serif,serif" fill="#dc9468" stroke="#dc9468" stroke-width="0.450" lengthAdjust="spacingAndGlyphs" opacity="1">WEN’AN</text>
<text x="485" y="215.600" font-size="25" textLength="71" font-family="Liberation Serif,serif" fill="#dc9468" stroke="#dc9468" stroke-width="0.450" lengthAdjust="spacingAndGlyphs" opacity="1">XIEZUO</text>
<text x="430" y="240.600" font-size="30.500" textLength="175.300" font-family="Liberation Serif,serif" fill="#dc9468" stroke="#dc9468" stroke-width="0.450" lengthAdjust="spacingAndGlyphs" opacity="1">JIQIAO YU SHILI</text>
<g fill="#ecce7e"><circle cx="472.50" cy="264" r="10.300"/><circle cx="486.85" cy="264" r="10.300"/><circle cx="501.20" cy="264" r="10.300"/><circle cx="515.55" cy="264" r="10.300"/><circle cx="529.90" cy="264" r="10.300"/><circle cx="544.25" cy="264" r="10.300"/><circle cx="558.60" cy="264" r="10.300"/><rect x="472" y="255" width="86" height="18"/></g>
<text x="465.600" y="269.300" font-size="14" font-weight="bold" textLength="102" lengthAdjust="spacing" fill="#d8621c">规范与技巧丛书</text>
<text x="470.300" y="295.800" font-size="16.200" textLength="90.700" font-family="Liberation Serif,Noto Serif CJK SC,serif" font-weight="700" fill="#fdf3ee" stroke="#fdf3ee" stroke-width="0.300" lengthAdjust="spacingAndGlyphs">营销文案写作</text>
<text x="478" y="314.300" font-size="15.500" textLength="77" font-family="Liberation Serif,Noto Serif CJK SC,serif" font-weight="700" fill="#fdf3ee" stroke="#fdf3ee" stroke-width="0.300" lengthAdjust="spacingAndGlyphs">技巧与实例</text>
<text x="436" y="331.700" textLength="173.300" font-size="7.600" fill="#fbe9e2" lengthAdjust="spacingAndGlyphs">此书立足中国企业实际，为本土企业量身定制，近200</text>
<text x="421.600" y="343.200" textLength="187.700" font-size="7.600" fill="#fbe9e2" lengthAdjust="spacingAndGlyphs">个文体，400个精彩营销范例，为我国大中小企业及7000万</text>
<text x="421.600" y="353.900" textLength="172.400" font-size="7.600" fill="#fbe9e2" lengthAdjust="spacingAndGlyphs">营销人员提供了最实用、最完备的营销文案写作范本。</text>
<circle cx="463.200" cy="367.8" r="2.300" fill="#fbe9e2"/>
<circle cx="463.200" cy="382.0" r="2.300" fill="#fbe9e2"/>
<circle cx="463.200" cy="396.0" r="2.300" fill="#fbe9e2"/>
<circle cx="463.200" cy="409.5" r="2.300" fill="#fbe9e2"/>
<text x="467" y="370.2" textLength="52" font-size="6.600" fill="#f3cfc5" lengthAdjust="spacingAndGlyphs">捕捉市场细微变化</text><text x="529" y="370.2" textLength="52" font-size="6.600" fill="#f3cfc5" lengthAdjust="spacingAndGlyphs">撰写透彻分析报告</text>
<text x="467" y="384.4" textLength="52" font-size="6.600" fill="#f3cfc5" lengthAdjust="spacingAndGlyphs">洞悉对手经营软肋</text><text x="529" y="384.4" textLength="52" font-size="6.600" fill="#f3cfc5" lengthAdjust="spacingAndGlyphs">提供超强营销方案</text>
<text x="467" y="398.4" textLength="45.500" font-size="6.600" fill="#f3cfc5" lengthAdjust="spacingAndGlyphs">做市场的领跑者</text><text x="522.500" y="398.4" textLength="45.500" font-size="6.600" fill="#f3cfc5" lengthAdjust="spacingAndGlyphs">做企业的助攻者</text>
<text x="467" y="411.9" textLength="92" font-size="6.600" fill="#f3cfc5" lengthAdjust="spacingAndGlyphs">最完备的营销文案写作实用手册</text>
</g>
<g transform="translate(5 4)" filter="url(#bl)" opacity="0.85"><path d="M459.2 250.1 L458.9 250.1 L458.6 250.1 L458.2 250.1 L457.7 249.9 L457.2 249.8 L456.7 249.8 L456.2 249.6 L455.6 249.6 L455.0 250.2 L454.4 250.2 L453.7 250.0 L452.9 249.7 L452.2 249.8 L451.4 249.4 L450.6 249.3 L450.0 250.7 L449.1 250.4 L448.2 250.4 L447.2 250.2 L446.4 251.3 L445.4 251.1 L444.4 251.1 L443.4 251.2 L442.2 250.8 L441.5 252.0 L440.5 252.2 L439.5 252.3 L438.5 252.3 L438.0 253.5 L436.9 253.5 L436.0 253.8 L434.9 253.8 L434.8 255.5 L433.9 255.8 L433.0 256.2 L431.9 256.2 L431.0 256.6 L430.8 258.0 L429.9 258.4 L429.0 258.7 L428.0 259.0 L427.8 260.3 L426.8 260.7 L425.8 260.9 L424.7 261.0 L423.8 261.4 L423.6 262.9 L422.7 263.3 L421.7 263.5 L420.8 264.1 L420.5 265.3 L419.4 265.6 L418.6 266.1 L417.5 266.3 L417.4 267.7 L416.4 268.0 L415.4 268.4 L414.5 268.8 L414.5 270.3 L413.6 270.7 L412.6 271.1 L411.8 271.7 L410.7 272.0 L410.8 273.5 L409.9 274.0 L409.2 274.7 L408.3 275.1 L408.2 276.3 L407.5 277.0 L406.6 277.4 L405.8 278.0 L404.9 278.6 L405.5 280.1 L404.7 280.7 L404.3 281.6 L403.6 282.3 L403.8 283.4 L403.2 284.2 L402.7 284.9 L402.2 285.6 L401.3 286.2 L402.0 287.4 L401.3 288.1 L400.9 288.8 L400.5 289.5 L399.9 290.1 L401.0 291.2 L400.5 291.8 L400.1 292.5 L399.8 293.2 L399.6 293.9 L399.0 294.6 L400.4 295.3 L400.2 296.0 L399.9 296.6 L399.8 297.3 L399.8 298.0 L399.5 298.7 L399.8 299.3 L400.8 299.8 L400.7 300.5 L400.7 301.3 L400.7 302.1 L400.8 302.8 L401.3 303.4 L402.5 303.4 L402.7 304.0 L402.9 304.6 L403.2 305.0 L403.5 305.4 L403.8 305.7 L404.0 306.0 L404.0 306.0 L404.2 306.2 L404.5 306.5 L404.7 306.8 L404.9 307.3 L405.1 307.8 L405.2 308.5 L405.5 309.1 L405.8 309.7 L406.3 310.2 L407.6 309.3 L407.9 310.0 L408.3 310.3 L408.9 310.5 L409.3 311.4 L410.0 311.1 L410.5 311.4 L411.1 311.4 L411.9 312.0 L411.9 309.7 L412.5 309.8 L413.0 309.7 L413.7 309.7 L414.3 309.6 L415.0 309.5 L415.6 309.2 L416.3 309.0 L416.1 307.5 L416.9 307.5 L417.4 307.0 L418.1 306.5 L419.0 306.3 L420.4 306.4 L419.5 304.4 L420.2 303.8 L421.3 303.6 L421.8 302.8 L423.2 302.7 L422.4 300.9 L423.5 300.5 L424.1 299.9 L425.3 299.7 L426.4 299.4 L427.4 299.1 L425.7 296.8 L426.6 296.4 L427.8 296.2 L428.0 295.3 L429.3 295.2 L427.8 293.3 L428.7 292.8 L429.3 292.3 L429.6 291.5 L430.4 291.0 L431.0 290.5 L430.5 289.2 L431.6 289.0 L432.2 288.5 L433.3 288.3 L433.8 287.7 L432.9 285.9 L433.8 285.6 L434.8 285.4 L435.7 285.1 L436.5 284.8 L436.6 283.7 L436.3 282.3 L437.0 281.8 L438.1 281.7 L439.2 281.6 L439.3 280.5 L439.2 279.1 L440.1 278.8 L440.9 278.4 L442.2 278.5 L442.8 277.8 L442.5 276.0 L443.5 275.7 L444.5 275.5 L445.8 275.5 L446.9 275.3 L445.9 272.9 L447.0 272.7 L447.8 272.1 L448.5 271.5 L449.6 271.3 L449.0 269.6 L450.1 269.3 L450.8 268.7 L451.4 268.0 L453.1 268.2 L453.0 267.0 L452.7 265.6 L453.8 265.3 L454.4 264.6 L455.2 264.1 L456.5 263.8 L454.9 261.8 L455.9 261.4 L456.5 260.7 L458.0 260.3 L458.7 259.5 L456.9 257.7 L457.6 256.9 L458.4 256.2 L459.5 255.5 L459.7 254.6 L458.4 253.3 L459.0 252.6 L459.3 251.9 L459.2 251.2 L459.3 250.6 L459.2 250.1 Z" fill="#6a140a"/><path d="M406.500 301 C403 308 398 318 393 327.500" fill="none" stroke="#6a140a" stroke-width="2.400" stroke-linecap="round"/></g>
<path d="M459.2 250.1 L458.9 250.1 L458.6 250.1 L458.2 250.1 L457.7 249.9 L457.2 249.8 L456.7 249.8 L456.2 249.6 L455.6 249.6 L455.0 250.2 L454.4 250.2 L453.7 250.0 L452.9 249.7 L452.2 249.8 L451.4 249.4 L450.6 249.3 L450.0 250.7 L449.1 250.4 L448.2 250.4 L447.2 250.2 L446.4 251.3 L445.4 251.1 L444.4 251.1 L443.4 251.2 L442.2 250.8 L441.5 252.0 L440.5 252.2 L439.5 252.3 L438.5 252.3 L438.0 253.5 L436.9 253.5 L436.0 253.8 L434.9 253.8 L434.8 255.5 L433.9 255.8 L433.0 256.2 L431.9 256.2 L431.0 256.6 L430.8 258.0 L429.9 258.4 L429.0 258.7 L428.0 259.0 L427.8 260.3 L426.8 260.7 L425.8 260.9 L424.7 261.0 L423.8 261.4 L423.6 262.9 L422.7 263.3 L421.7 263.5 L420.8 264.1 L420.5 265.3 L419.4 265.6 L418.6 266.1 L417.5 266.3 L417.4 267.7 L416.4 268.0 L415.4 268.4 L414.5 268.8 L414.5 270.3 L413.6 270.7 L412.6 271.1 L411.8 271.7 L410.7 272.0 L410.8 273.5 L409.9 274.0 L409.2 274.7 L408.3 275.1 L408.2 276.3 L407.5 277.0 L406.6 277.4 L405.8 278.0 L404.9 278.6 L405.5 280.1 L404.7 280.7 L404.3 281.6 L403.6 282.3 L403.8 283.4 L403.2 284.2 L402.7 284.9 L402.2 285.6 L401.3 286.2 L402.0 287.4 L401.3 288.1 L400.9 288.8 L400.5 289.5 L399.9 290.1 L401.0 291.2 L400.5 291.8 L400.1 292.5 L399.8 293.2 L399.6 293.9 L399.0 294.6 L400.4 295.3 L400.2 296.0 L399.9 296.6 L399.8 297.3 L399.8 298.0 L399.5 298.7 L399.8 299.3 L400.8 299.8 L400.7 300.5 L400.7 301.3 L400.7 302.1 L400.8 302.8 L401.3 303.4 L402.5 303.4 L402.7 304.0 L402.9 304.6 L403.2 305.0 L403.5 305.4 L403.8 305.7 L404.0 306.0 L404.0 306.0 L404.2 306.2 L404.5 306.5 L404.7 306.8 L404.9 307.3 L405.1 307.8 L405.2 308.5 L405.5 309.1 L405.8 309.7 L406.3 310.2 L407.6 309.3 L407.9 310.0 L408.3 310.3 L408.9 310.5 L409.3 311.4 L410.0 311.1 L410.5 311.4 L411.1 311.4 L411.9 312.0 L411.9 309.7 L412.5 309.8 L413.0 309.7 L413.7 309.7 L414.3 309.6 L415.0 309.5 L415.6 309.2 L416.3 309.0 L416.1 307.5 L416.9 307.5 L417.4 307.0 L418.1 306.5 L419.0 306.3 L420.4 306.4 L419.5 304.4 L420.2 303.8 L421.3 303.6 L421.8 302.8 L423.2 302.7 L422.4 300.9 L423.5 300.5 L424.1 299.9 L425.3 299.7 L426.4 299.4 L427.4 299.1 L425.7 296.8 L426.6 296.4 L427.8 296.2 L428.0 295.3 L429.3 295.2 L427.8 293.3 L428.7 292.8 L429.3 292.3 L429.6 291.5 L430.4 291.0 L431.0 290.5 L430.5 289.2 L431.6 289.0 L432.2 288.5 L433.3 288.3 L433.8 287.7 L432.9 285.9 L433.8 285.6 L434.8 285.4 L435.7 285.1 L436.5 284.8 L436.6 283.7 L436.3 282.3 L437.0 281.8 L438.1 281.7 L439.2 281.6 L439.3 280.5 L439.2 279.1 L440.1 278.8 L440.9 278.4 L442.2 278.5 L442.8 277.8 L442.5 276.0 L443.5 275.7 L444.5 275.5 L445.8 275.5 L446.9 275.3 L445.9 272.9 L447.0 272.7 L447.8 272.1 L448.5 271.5 L449.6 271.3 L449.0 269.6 L450.1 269.3 L450.8 268.7 L451.4 268.0 L453.1 268.2 L453.0 267.0 L452.7 265.6 L453.8 265.3 L454.4 264.6 L455.2 264.1 L456.5 263.8 L454.9 261.8 L455.9 261.4 L456.5 260.7 L458.0 260.3 L458.7 259.5 L456.9 257.7 L457.6 256.9 L458.4 256.2 L459.5 255.5 L459.7 254.6 L458.4 253.3 L459.0 252.6 L459.3 251.9 L459.2 251.2 L459.3 250.6 L459.2 250.1 Z" fill="url(#fg)" stroke="#fff" stroke-width="2.200" stroke-linejoin="round"/>
<path d="M426.500 273.500 C420 281 414 290 409 298 C405 306 399 317 393 327.500" fill="none" stroke="#fff" stroke-width="4.800" stroke-linecap="round"/>
<path d="M459.2 250.1 L458.9 250.1 L458.6 250.1 L458.2 250.1 L457.7 249.9 L457.2 249.8 L456.7 249.8 L456.2 249.6 L455.6 249.6 L455.0 250.2 L454.4 250.2 L453.7 250.0 L452.9 249.7 L452.2 249.8 L451.4 249.4 L450.6 249.3 L450.0 250.7 L449.1 250.4 L448.2 250.4 L447.2 250.2 L446.4 251.3 L445.4 251.1 L444.4 251.1 L443.4 251.2 L442.2 250.8 L441.5 252.0 L440.5 252.2 L439.5 252.3 L438.5 252.3 L438.0 253.5 L436.9 253.5 L436.0 253.8 L434.9 253.8 L434.8 255.5 L433.9 255.8 L433.0 256.2 L431.9 256.2 L431.0 256.6 L430.8 258.0 L429.9 258.4 L429.0 258.7 L428.0 259.0 L427.8 260.3 L426.8 260.7 L425.8 260.9 L424.7 261.0 L423.8 261.4 L423.6 262.9 L422.7 263.3 L421.7 263.5 L420.8 264.1 L420.5 265.3 L419.4 265.6 L418.6 266.1 L417.5 266.3 L417.4 267.7 L416.4 268.0 L415.4 268.4 L414.5 268.8 L414.5 270.3 L413.6 270.7 L412.6 271.1 L411.8 271.7 L410.7 272.0 L410.8 273.5 L409.9 274.0 L409.2 274.7 L408.3 275.1 L408.2 276.3 L407.5 277.0 L406.6 277.4 L405.8 278.0 L404.9 278.6 L405.5 280.1 L404.7 280.7 L404.3 281.6 L403.6 282.3 L403.8 283.4 L403.2 284.2 L402.7 284.9 L402.2 285.6 L401.3 286.2 L402.0 287.4 L401.3 288.1 L400.9 288.8 L400.5 289.5 L399.9 290.1 L401.0 291.2 L400.5 291.8 L400.1 292.5 L399.8 293.2 L399.6 293.9 L399.0 294.6 L400.4 295.3 L400.2 296.0 L399.9 296.6 L399.8 297.3 L399.8 298.0 L399.5 298.7 L399.8 299.3 L400.8 299.8 L400.7 300.5 L400.7 301.3 L400.7 302.1 L400.8 302.8 L401.3 303.4 L402.5 303.4 L402.7 304.0 L402.9 304.6 L403.2 305.0 L403.5 305.4 L403.8 305.7 L404.0 306.0 L404.0 306.0 L404.2 306.2 L404.5 306.5 L404.7 306.8 L404.9 307.3 L405.1 307.8 L405.2 308.5 L405.5 309.1 L405.8 309.7 L406.3 310.2 L407.6 309.3 L407.9 310.0 L408.3 310.3 L408.9 310.5 L409.3 311.4 L410.0 311.1 L410.5 311.4 L411.1 311.4 L411.9 312.0 L411.9 309.7 L412.5 309.8 L413.0 309.7 L413.7 309.7 L414.3 309.6 L415.0 309.5 L415.6 309.2 L416.3 309.0 L416.1 307.5 L416.9 307.5 L417.4 307.0 L418.1 306.5 L419.0 306.3 L420.4 306.4 L419.5 304.4 L420.2 303.8 L421.3 303.6 L421.8 302.8 L423.2 302.7 L422.4 300.9 L423.5 300.5 L424.1 299.9 L425.3 299.7 L426.4 299.4 L427.4 299.1 L425.7 296.8 L426.6 296.4 L427.8 296.2 L428.0 295.3 L429.3 295.2 L427.8 293.3 L428.7 292.8 L429.3 292.3 L429.6 291.5 L430.4 291.0 L431.0 290.5 L430.5 289.2 L431.6 289.0 L432.2 288.5 L433.3 288.3 L433.8 287.7 L432.9 285.9 L433.8 285.6 L434.8 285.4 L435.7 285.1 L436.5 284.8 L436.6 283.7 L436.3 282.3 L437.0 281.8 L438.1 281.7 L439.2 281.6 L439.3 280.5 L439.2 279.1 L440.1 278.8 L440.9 278.4 L442.2 278.5 L442.8 277.8 L442.5 276.0 L443.5 275.7 L444.5 275.5 L445.8 275.5 L446.9 275.3 L445.9 272.9 L447.0 272.7 L447.8 272.1 L448.5 271.5 L449.6 271.3 L449.0 269.6 L450.1 269.3 L450.8 268.7 L451.4 268.0 L453.1 268.2 L453.0 267.0 L452.7 265.6 L453.8 265.3 L454.4 264.6 L455.2 264.1 L456.5 263.8 L454.9 261.8 L455.9 261.4 L456.5 260.7 L458.0 260.3 L458.7 259.5 L456.9 257.7 L457.6 256.9 L458.4 256.2 L459.5 255.5 L459.7 254.6 L458.4 253.3 L459.0 252.6 L459.3 251.9 L459.2 251.2 L459.3 250.6 L459.2 250.1 Z" fill="url(#fg)"/>
<path d="M426.500 273.500 C420 281 414 290 409 298 C405 306 399 317 393 327.500" fill="none" stroke="#151a26" stroke-width="1.200" stroke-linecap="round"/>
<path d="M406.500 301 C403 308 398 318 393 327.500" fill="none" stroke="#151a26" stroke-width="2.400" stroke-linecap="round"/>
<g stroke="#fff" stroke-width="0.700" opacity="0.8" fill="none"><path d="M449 256 l4 -3 M442 262 l5 -4 M434 270 l5 -4 M440 279 l5 -2 M431 289 l5 -3 M424 298 l4 -1 M412 276 l-3 4 M405 288 l-2 4"/></g>
<rect x="576.800" y="459" width="69" height="60.400" fill="#efecf3"/>
<text x="583" y="469.300" font-family="Liberation Sans,sans-serif" font-weight="bold" font-size="4.800" textLength="58" lengthAdjust="spacingAndGlyphs" fill="#222">ISBN 978-7-219-06340-8</text>
<g fill="#17171b"><rect x="584.40" y="471.400" width="0.62" height="35.600"/><rect x="585.65" y="471.400" width="0.62" height="35.600"/><rect x="587.51" y="471.400" width="1.25" height="35.600"/><rect x="589.38" y="471.400" width="1.25" height="35.600"/><rect x="591.25" y="471.400" width="1.87" height="35.600"/><rect x="593.74" y="471.400" width="0.62" height="35.600"/><rect x="595.61" y="471.400" width="1.25" height="35.600"/><rect x="597.48" y="471.400" width="1.25" height="35.600"/><rect x="599.34" y="471.400" width="1.25" height="35.600"/><rect x="601.83" y="471.400" width="0.62" height="35.600"/><rect x="603.08" y="471.400" width="1.25" height="35.600"/><rect x="605.57" y="471.400" width="0.62" height="35.600"/><rect x="607.44" y="471.400" width="0.62" height="35.600"/><rect x="608.68" y="471.400" width="1.25" height="35.600"/><rect x="610.55" y="471.400" width="1.25" height="35.600"/><rect x="612.42" y="471.400" width="1.25" height="35.600"/><rect x="614.29" y="471.400" width="0.62" height="35.600"/><rect x="615.53" y="471.400" width="1.25" height="35.600"/><rect x="617.40" y="471.400" width="1.25" height="35.600"/><rect x="619.89" y="471.400" width="0.62" height="35.600"/><rect x="621.13" y="471.400" width="1.87" height="35.600"/><rect x="623.62" y="471.400" width="0.62" height="35.600"/><rect x="625.49" y="471.400" width="1.25" height="35.600"/><rect x="627.36" y="471.400" width="1.25" height="35.600"/><rect x="629.23" y="471.400" width="0.62" height="35.600"/><rect x="630.47" y="471.400" width="1.87" height="35.600"/><rect x="632.96" y="471.400" width="1.25" height="35.600"/><rect x="634.83" y="471.400" width="0.62" height="35.600"/><rect x="636.08" y="471.400" width="0.62" height="35.600"/></g>
<text x="582.400" y="513" font-family="Liberation Sans,sans-serif" font-size="6.500" textLength="59.400" lengthAdjust="spacingAndGlyphs" fill="#222">9 787219 063408 &gt;</text>
<text x="590.800" y="526.400" font-size="7" textLength="40.200" lengthAdjust="spacingAndGlyphs" fill="#f6d8cf" filter="url(#tb)">定价:35.00元</text></svg>
</div>
<!-- main scrollbar -->
<div class="a" style="left:739px;top:143px;width:17px;height:400px;background:linear-gradient(90deg,#fafafa 0,#fafafa 1px,#e3e3e3 1.500px,#f0f0f0 6px,#f0f0f0)"></div>
<svg style="left:739px;top:143px" width="17" height="400" viewBox="739 143 17 400">
  <rect x="739.500" y="142.500" width="16" height="9" fill="#e3e3e3" stroke="#8e8e8e"/>
  <path d="M743.500 164 L747.500 160 L751.500 164 Z" fill="#555"/>
  <path d="M743.500 535.500 L751.500 535.500 L747.500 539.500 Z" fill="#555"/>
  <rect x="740.500" y="513.500" width="14" height="14" rx="1.500" fill="#e4e4e4" stroke="#8e8e8e"/>
</svg>
<div class="a" style="left:742px;top:515px;width:11px;height:11px;background:linear-gradient(90deg,#f4f4f4,#dcdcdc)"></div>


<!-- ================= STATUS ================= -->

<div class="a" style="left:0;top:543px;width:756px;height:25px;background:#f0f0f0"></div>
<div class="a" style="left:182px;top:548px;width:115px;height:24px;background:#fff;border:1px solid #a0a0a0"></div>
<div class="t" style="left:186px;top:552px;font-size:13px;line-height:13px;height:13px;color:#111">368 / 368</div>
<div class="arr" style="left:287px;top:557px"></div>
<div class="a" style="left:438px;top:550px;width:24px;height:18px;background:#d5bbe6"></div>
<div class="t" style="left:531px;top:552px;font-size:13px;line-height:13px;height:13px;color:#253d6c">33.33%</div>
<div class="arr" style="left:593px;top:556px"></div>
<!--ICONS_BEGIN--><svg id="icons" style="left:0;top:0;pointer-events:none" width="756" height="568" viewBox="0 0 756 568"><g fill="none" stroke="#808080" stroke-width="1.100"><path d="M554.300 11 L554.300 9.500 C550.300 7 549.800 1.500 553 -0.800 C555 -2 557.500 -2 559.500 -0.800 C562.700 1.500 562.200 7 558.200 9.500 L558.200 11 Z" fill="#f4f4f4"/><path d="M554.300 13 L558.300 13"/></g>
<circle cx="608" cy="4.700" r="8" fill="#e9a955"/>
<path d="M608 9.500 C603.500 6.500 602.500 4 602.800 2.200 C603.200 0 606.500 -0.500 608 2 C609.500 -0.500 612.800 0 613.200 2.200 C613.500 4 612.500 6.500 608 9.500 Z" fill="#fff"/>
<path d="M625 -1 L633 -1 L633 5 L630 8 L630 12 L625 12 Z" fill="#eab368"/>
<circle cx="635.200" cy="7" r="3.600" fill="#f4f4f4" stroke="#858585" stroke-width="1.200"/><path d="M637.800 9.800 L641 13" stroke="#858585" stroke-width="1.600" stroke-linecap="round"/>
<path d="M14.600 39.300 Q13.500 36.500 12 35 L9.400 31.200 Q8.700 29.800 9.700 29.100 Q10.700 28.600 11.600 29.700 L13 31.400 L13 26.300 Q13 25.200 14 25.200 Q15.100 25.200 15.100 26.300 L15.100 25.400 Q15.100 24.300 16.200 24.300 Q17.300 24.300 17.300 25.400 L17.300 26 Q17.300 24.900 18.400 24.900 Q19.500 24.900 19.500 26 L19.500 27.600 Q19.500 26.600 20.600 26.600 Q21.700 26.600 21.700 27.700 L21.700 34 Q21.700 37 20.300 39.300 Z" fill="#fff" stroke="#8c8c8c" stroke-width="1" stroke-linejoin="round"/>
<path d="M15.100 26.300 L15.100 31 M17.300 26 L17.300 31 M19.500 27.600 L19.500 31" stroke="#9a9a9a" stroke-width="0.900" fill="none"/>
<path d="M8.200 47 L17.700 47 L17.700 49 L14 49 L14 58.600 L11.900 58.600 L11.900 49 L8.200 49 Z" fill="#4b7fb1"/>
<path d="M17 51.800 L17 60 L19 58.200 L20.300 61 L21.500 60.400 L20.300 57.700 L22.800 57.500 Z" fill="#fff" stroke="#8a8a8a" stroke-width="0.800" stroke-linejoin="round"/>
<circle cx="13.300" cy="75.700" r="4.900" fill="#fff" stroke="#8c8c8c" stroke-width="1.100"/><path d="M17 79.500 L22.800 83" stroke="#8c8c8c" stroke-width="2" stroke-linecap="round"/>
<path d="M10.600 75.700 L16 75.700 M13.300 73 L13.300 78.400" stroke="#3d9b7b" stroke-width="1.500"/>
<path d="M108 52.300 L97.500 52.300 L97.500 25.500 L112.500 25.500 L117.500 30.500 L117.500 42" fill="none" stroke="#cfcfcf" stroke-width="1"/><path d="M112.500 25.500 L112.500 30.500 L117.500 30.500 Z" fill="#cfcfcf"/>
<path d="M102 35 L112 35 L112 37 L108 37 L108 46 L106 46 L106 37 L102 37 Z" fill="#d2d2d2"/>
<path d="M109.20 54.60 L113.51 53.01 L124.64 42.02 L121.97 39.32 L110.84 50.31 Z" fill="#b3c8e2"/><path d="M125.30 41.37 L126.94 39.75 L124.26 37.05 L122.62 38.67 Z" fill="#b3c8e2"/>
<path d="M150 52.300 L139.500 52.300 L139.500 25.500 L154.500 25.500 L159.500 30.500 L159.500 42" fill="none" stroke="#cfcfcf" stroke-width="1"/><path d="M154.500 25.500 L154.500 30.500 L159.500 30.500 Z" fill="#cfcfcf"/>
<rect x="142.500" y="32.800" width="14.300" height="8.500" fill="#fff" stroke="#cfcfcf" stroke-width="1"/><rect x="141.300" y="36.500" width="12" height="10" fill="#fff" stroke="#cfcfcf" stroke-width="1"/>
<path d="M143 45.500 L146.300 41 L148.500 44 L150 42 L152.300 45.500 Z" fill="#a9cdb9"/><rect x="150" y="38.300" width="1.800" height="1.800" fill="#f6c9a0"/>
<path d="M151.30 54.60 L155.61 53.03 L166.82 42.02 L164.16 39.31 L152.95 50.32 Z" fill="#b3c8e2"/><path d="M167.48 41.38 L169.13 39.76 L166.47 37.04 L164.82 38.66 Z" fill="#b3c8e2"/>
<path d="M180.500 24.500 L188.500 24.500 L192.500 28.500 L192.500 38.500 L180.500 38.500 Z" fill="#fff" stroke="#cfcfcf"/><path d="M188.500 24.500 L188.500 28.500 L192.500 28.500 Z" fill="#cfcfcf"/>
<path d="M183 30.500 L190 30.500 M183 33.500 L190 33.500 M186.500 27 L186.500 30 M186.500 34 L186.500 37 M185 28.500 L186.500 27 L188 28.500 M185 35.500 L186.500 37 L188 35.500" stroke="#a9c4e0" stroke-width="1" fill="none"/>
<text x="178.200" y="53" font-size="7" textLength="15" lengthAdjust="spacingAndGlyphs" fill="#bcbcbc" font-family="Liberation Sans,sans-serif">ABC</text>
<path d="M179.500 56.300 L183 59.800 L191.500 53.300" fill="none" stroke="#a5c0df" stroke-width="1.900"/>
<path d="M180.500 68.500 L188.500 68.500 L192.500 72.500 L192.500 82.500 L180.500 82.500 Z" fill="#fff" stroke="#5a5a5a"/><path d="M188.500 68.500 L188.500 72.500 L192.500 72.500 Z" fill="#5a5a5a"/>
<text x="182.300" y="76.300" font-size="6.500" fill="#333" font-family="Liberation Sans,sans-serif">b</text><text x="187.600" y="81.300" font-size="6.500" fill="#333" font-family="Liberation Sans,sans-serif">a</text>
<path d="M183.300 77.300 L186.500 80 M184.800 80.300 L186.800 80.300 L186.800 78.300" stroke="#2c6cb8" stroke-width="1" fill="none"/>
<path d="M213 25.200 L225 25.200 L225 27.300 L220.100 27.300 L220.100 38.700 L217.900 38.700 L217.900 27.300 L213 27.300 Z" fill="#a9c0e0"/>
<rect x="212.500" y="47.500" width="13.400" height="13" fill="#fff" stroke="#cfcfcf"/><path d="M214.300 58.500 L215.300 52.500 L217 52.500 L217.600 58.500 Z" fill="#b2d2c2"/><circle cx="222.300" cy="50.300" r="1.300" fill="#f6c9a0"/>
<path d="M218.500 53.500 L227 53.500 L227 59.500 L222.500 59.500 L221 61.500 L221 59.500 L218.500 59.500 Z" fill="#fff" stroke="#c4c4c4" stroke-width="0.900"/><path d="M220 55.500 L225.500 55.500 M220 57.500 L225.500 57.500" stroke="#d0d0d0" stroke-width="0.700"/>
<path d="M228.800 52 L234 52 L231.400 54.700 Z" fill="#8c8c8c"/><path d="M228.800 74.200 L234 74.200 L231.400 76.900 Z" fill="#8c8c8c"/>
<path d="M219.500 70.500 L213.500 70.500 Q212.500 70.500 212.500 71.500 L212.500 77.500 L215 77.500" fill="none" stroke="#a9c0e0" stroke-width="1"/><path d="M219.500 68.300 A6 6 0 0 1 226.800 76" fill="none" stroke="#a9c0e0" stroke-width="1"/>
<path d="M220.700 71.300 L226.200 77 L220.700 82.700 L215.200 77 Z" fill="#fff" stroke="#b9cde8" stroke-width="1" stroke-linejoin="round"/>
<path d="M265 51.500 L253.500 51.500 L253.500 26.500 L269 26.500 L273 30.500 L273 40" fill="none" stroke="#cfcfcf" stroke-width="1"/><path d="M269 26.500 L269 30.500 L273 30.500 Z" fill="#cfcfcf"/>
<path d="M256.200 35.200 L263.500 35.200 L263.500 36.700 L260.600 36.700 L260.600 44.500 L259.100 44.500 L259.100 36.700 L256.200 36.700 Z M264.600 38 L270 38 L270 39.400 L268 39.400 L268 44.500 L266.600 44.500 L266.600 39.400 L264.600 39.400 Z" fill="#d2d2d2"/>
<path d="M263.60 53.20 L267.26 51.96 L278.45 41.47 L276.27 39.13 L265.07 49.63 Z" fill="#b3c8e2"/><path d="M279.09 40.87 L280.69 39.37 L278.51 37.03 L276.91 38.53 Z" fill="#b3c8e2"/>
<path d="M310.500 26.500 L326 26.500 L331 31.500 L331 53 L310.500 53 Z" fill="#fff" stroke="#cfcfcf"/><path d="M326 26.500 L326 31.500 L331 31.500 Z" fill="#cfcfcf"/>
<path d="M314.200 35.200 L314.200 42.500 Q314.200 45.500 317.300 45.500 Q320.400 45.500 320.400 42.500 L320.400 38 Q320.400 35.200 323 35.200 Q325.700 35.200 325.700 38 L325.700 46" fill="none" stroke="#a9c4e0" stroke-width="1.100"/><path d="M323.200 43.800 L328.200 43.800 L325.700 47.200 Z" fill="#a9c4e0"/>
<text x="363.800" y="41" font-size="11.500" font-weight="bold" fill="#454545" font-family="Liberation Sans,sans-serif">A</text>
<path d="M401 33.500 L415 33.500 M403 36.400 L413 36.400 M401 39.400 L415 39.400 M403 42.300 L413 42.300" stroke="#6a6a6a" stroke-width="0.900"/>
<rect x="442.500" y="32.300" width="11.300" height="11.300" fill="none" stroke="#7a7a7a" stroke-width="0.900"/>
<rect x="441.2" y="30.999999999999996" width="2.600" height="2.600" fill="#7a7a7a"/>
<rect x="452.5" y="30.999999999999996" width="2.600" height="2.600" fill="#7a7a7a"/>
<rect x="441.2" y="42.300000000000004" width="2.600" height="2.600" fill="#7a7a7a"/>
<rect x="452.5" y="42.300000000000004" width="2.600" height="2.600" fill="#7a7a7a"/>
<path d="M444.600 34.500 L451.200 34.500 L451.200 35.600 L448.500 35.600 L448.500 41 L447.300 41 L447.300 35.600 L444.600 35.600 Z" fill="#4a7ec2"/>
<defs><linearGradient id="ck1" x1="0" y1="0" x2="1" y2="0"><stop offset="0" stop-color="#6e6e6e"/><stop offset="1" stop-color="#8f8f8f"/></linearGradient><linearGradient id="ck2" x1="0" y1="0" x2="1" y2="0"><stop offset="0" stop-color="#b5b5b5"/><stop offset="1" stop-color="#939393"/></linearGradient></defs>
<rect x="481" y="31.300" width="14" height="13.800" fill="#fff" stroke="#8c8c8c" stroke-width="0.800"/><rect x="481" y="31.300" width="7" height="6.900" fill="url(#ck1)"/><rect x="481" y="38.200" width="7" height="6.900" fill="#c9c9c9"/><rect x="488" y="38.200" width="7" height="6.900" fill="url(#ck2)"/>
<path d="M522.500 31.500 L530.500 31.500 L534 35 L534 45.200 L522.500 45.200 Z" fill="#fff" stroke="#6a6a6a" stroke-width="1"/><path d="M530.500 31.500 L530.500 35 L534 35" fill="none" stroke="#6a6a6a" stroke-width="0.900"/><path d="M522 31 L526.600 31 L526.600 38.800 L524.300 37 L522 38.800 Z" fill="#7c3b93"/>
<rect x="560.200" y="32" width="14.600" height="11.800" fill="#3b72ba"/><rect x="561.300" y="35.600" width="12.400" height="4.700" fill="#fff"/><g fill="#fff"><rect x="561.6" y="33.5" width="1" height="1.100"/><rect x="563.5" y="33.5" width="1" height="1.100"/><rect x="565.4" y="33.5" width="1" height="1.100"/><rect x="567.3" y="33.5" width="1" height="1.100"/><rect x="569.2" y="33.5" width="1" height="1.100"/><rect x="571.1" y="33.5" width="1" height="1.100"/><rect x="573.0" y="33.5" width="1" height="1.100"/><rect x="561.6" y="41.5" width="1" height="1.100"/><rect x="563.5" y="41.5" width="1" height="1.100"/><rect x="565.4" y="41.5" width="1" height="1.100"/><rect x="567.3" y="41.5" width="1" height="1.100"/><rect x="569.2" y="41.5" width="1" height="1.100"/><rect x="571.1" y="41.5" width="1" height="1.100"/><rect x="573.0" y="41.5" width="1" height="1.100"/></g>
<path d="M738 102.500 L742.300 98.200 L746.600 102.500" fill="none" stroke="#a0a0a0" stroke-width="1.500"/>
<path d="M44.5 175.5 L42.5 175.5 L42.5 187.5 L49.0 187.5" fill="none" stroke="#3b6fb6" stroke-width="1"/><path d="M44.5 173.500 L50.5 173.500 L53.5 176.500 L53.5 185.500 L44.5 185.500 Z" fill="#fff" stroke="#3b6fb6" stroke-width="1"/><path d="M50.5 173.500 L50.5 176.500 L53.5 176.500 Z" fill="#3b6fb6"/>
<circle cx="51.4" cy="182.700" r="3.900" fill="#fff" stroke="#6c6c6c" stroke-width="1"/><path d="M54.199999999999996 185.500 L56.4 188" stroke="#6c6c6c" stroke-width="1.500" stroke-linecap="round"/>
<path d="M49.199999999999996 182.700 L53.6 182.700" stroke="#3b6fb6" stroke-width="1.100"/>
<path d="M51.4 180.500 L51.4 184.900" stroke="#3b6fb6" stroke-width="1.100"/>
<path d="M79.5 175.5 L77.5 175.5 L77.5 187.5 L84.0 187.5" fill="none" stroke="#3b6fb6" stroke-width="1"/><path d="M79.5 173.500 L85.5 173.500 L88.5 176.500 L88.5 185.500 L79.5 185.500 Z" fill="#fff" stroke="#3b6fb6" stroke-width="1"/><path d="M85.5 173.500 L85.5 176.500 L88.5 176.500 Z" fill="#3b6fb6"/>
<circle cx="86.4" cy="182.700" r="3.900" fill="#fff" stroke="#6c6c6c" stroke-width="1"/><path d="M89.2 185.500 L91.4 188" stroke="#6c6c6c" stroke-width="1.500" stroke-linecap="round"/>
<path d="M84.2 182.700 L88.60000000000001 182.700" stroke="#3b6fb6" stroke-width="1.100"/>
<path d="M114.5 175.5 L112.5 175.5 L112.5 187.5 L119.0 187.5" fill="none" stroke="#c6c6c6" stroke-width="1"/><path d="M114.5 173.500 L120.5 173.500 L123.5 176.500 L123.5 185.500 L114.5 185.500 Z" fill="#fff" stroke="#c6c6c6" stroke-width="1"/><path d="M120.5 173.500 L120.5 176.500 L123.5 176.500 Z" fill="#c6c6c6"/>
<rect x="117.500" y="178.300" width="8" height="7.500" fill="#fff"/><path d="M118.300 179 L122.800 179.600 L121.500 184.600 L118.300 184.600 Z" fill="#bdbdbd"/><path d="M120.500 181.500 Q124 177.800 127.600 181.600" fill="none" stroke="#bdbdbd" stroke-width="1.700"/>
<path d="M149.5 175.5 L147.5 175.5 L147.5 187.5 L154.0 187.5" fill="none" stroke="#c6c6c6" stroke-width="1"/><path d="M149.5 173.500 L155.5 173.500 L158.5 176.500 L158.5 185.500 L149.5 185.500 Z" fill="#fff" stroke="#c6c6c6" stroke-width="1"/><path d="M155.5 173.500 L155.5 176.500 L158.5 176.500 Z" fill="#c6c6c6"/>
<rect x="152" y="178.300" width="9" height="7.500" fill="#fff"/><path d="M161.700 179 L157.200 179.600 L158.500 184.600 L161.700 184.600 Z" fill="#bdbdbd"/><path d="M159.500 181.500 Q156 177.800 152.400 181.600" fill="none" stroke="#bdbdbd" stroke-width="1.700"/>
<path d="M184.5 175.5 L182.5 175.5 L182.5 187.5 L189.0 187.5" fill="none" stroke="#c6c6c6" stroke-width="1"/><path d="M184.5 173.500 L190.5 173.500 L193.5 176.500 L193.5 185.500 L184.5 185.500 Z" fill="#fff" stroke="#c6c6c6" stroke-width="1"/><path d="M190.5 173.500 L190.5 176.500 L193.5 176.500 Z" fill="#c6c6c6"/>
<circle cx="193" cy="183.200" r="4.300" fill="#b9b9b9"/><path d="M190.500 183.200 L195.500 183.200 M193 180.700 L193 185.700" stroke="#fff" stroke-width="1.200"/>
<path d="M219.5 175.5 L217.5 175.5 L217.5 187.5 L224.0 187.5" fill="none" stroke="#c6c6c6" stroke-width="1"/><path d="M219.5 173.500 L225.5 173.500 L228.5 176.500 L228.5 185.500 L219.5 185.500 Z" fill="#fff" stroke="#c6c6c6" stroke-width="1"/><path d="M225.5 173.500 L225.5 176.500 L228.5 176.500 Z" fill="#c6c6c6"/>
<circle cx="227.700" cy="183.200" r="4.300" fill="#b9b9b9"/><path d="M225.900 181.400 L229.500 185 M229.500 181.400 L225.900 185" stroke="#fff" stroke-width="1.200"/>
<path d="M253 173 L262 173 L262 188.400 L257.500 184.500 L253 188.400 Z" fill="#8b4ba9"/>
<ellipse cx="262.400" cy="180.600" rx="5.400" ry="3.700" fill="#4b9b82" stroke="#fff" stroke-width="0.800"/><circle cx="262.400" cy="180.600" r="1.800" fill="none" stroke="#e8f4ef" stroke-width="0.900"/>
<path d="M10.500 196.500 L22 196.500 L26.200 200.700 L26.200 215.700 L10.500 215.700 Z" fill="#fff" stroke="#6a6a6a" stroke-width="1"/><path d="M22 196.500 L22 200.700 L26.200 200.700 Z" fill="#6a6a6a"/><path d="M10 196 L15 196 L15 207.600 L12.500 205.500 L10 207.600 Z" fill="#8b4ba9"/>
<path d="M9.500 260 L9.500 242.500 L22 242.500" fill="none" stroke="#4a79b8" stroke-width="1"/><path d="M11.500 261.500 L11.500 244.500 L24 244.500" fill="none" stroke="#4a79b8" stroke-width="1"/><rect x="13.500" y="246.500" width="13" height="16" fill="#fff" stroke="#4a79b8" stroke-width="1.100"/>
<path d="M15 299.500 L28.700 299.500 L20.800 306.500 L7.500 306.500 Z" fill="#fff" stroke="#4a79b8" stroke-width="0.900"/><path d="M15 293 L28.700 293 L20.800 300.500 L7.500 300.500 Z" fill="#4a79b8" stroke="#4a79b8" stroke-width="0.900"/><path d="M15 288 L28.700 288 L20.800 295.500 L7.500 295.500 Z" fill="#fff" stroke="#4a79b8" stroke-width="0.900"/>
<path d="M15.500 340 L28 340 L28 350 L26.500 350 L26.500 353 L23.500 350 L15.500 350 Z" fill="#7f7f7f"/><rect x="17" y="343" width="8.500" height="4" fill="#f0f0f0"/>
<path d="M7 332 L23 332 L23 345.300 L12 345.300 L9 348.500 L9 345.300 L7 345.300 Z" fill="#e9a955"/><path d="M9.500 335 L20.500 335 M9.500 338 L20.500 338 M9.500 341 L20.500 341" stroke="#fbe7c8" stroke-width="1"/>
<path d="M25.800 380.200 L16.200 391.700 C14.800 393.300 12.600 391.500 14 389.800 L21.500 380.800 C24 377.800 28.300 381.200 25.800 384.300 L16.800 394.800 C13.500 398.600 8.200 394 11.300 390.200 L19.800 380" fill="none" stroke="#4a79b8" stroke-width="1.700" stroke-linecap="round"/>
<rect x="7.500" y="421.500" width="16" height="21" fill="#fff" stroke="#5f5f5f" stroke-width="1"/><path d="M10 437 L18 437 M10 439.500 L18 439.500" stroke="#8a8a8a" stroke-width="0.800"/>
<path d="M12 430.500 C11 427.500 14 425 17 427 M13.500 432.500 C12.500 429.500 15 427.700 17.300 429 M15.500 433 C14.500 431 16.500 430 18 431" fill="none" stroke="#8b4ba9" stroke-width="1"/>
<circle cx="24" cy="439" r="5" fill="#3f78bd"/><path d="M21.800 441.200 L22.500 439 L25.500 436 L27 437.500 L24 440.500 Z" fill="#fff"/>
<path d="M12 476 L12 472 C12 465 24 465 24 472 L24 476" fill="none" stroke="#e8c17e" stroke-width="2.600"/><rect x="9" y="475.500" width="18" height="12" rx="1.500" fill="#e8c17e"/><circle cx="18" cy="480" r="1.400" fill="#fff"/><rect x="17.300" y="480" width="1.400" height="3.500" fill="#fff"/>
<rect x="7.500" y="519.500" width="21" height="11" fill="#fff" stroke="#8a8a8a" stroke-width="1"/><rect x="7" y="519" width="22" height="4" fill="#3f78bd"/><rect x="16.500" y="525.500" width="9" height="3" fill="#fff" stroke="#9a9a9a" stroke-width="0.800"/><path d="M10 527 L14 527" stroke="#9a9a9a" stroke-width="0.900"/><rect x="0" y="530" width="32" height="8" fill="#f0f0f0"/>
<g fill="#242424" stroke="#fafafa" stroke-width="0.800" paint-order="stroke"><path d="M143 552 L143 565 L136.200 558.500 Z"/><path d="M148 552 L148 565 L145.200 562.500 L145.200 554.800 Z"/><path d="M170 552 L170 565 L163 558.500 Z"/></g>
<path d="M306 552 L306 564.700 L313.300 558.300 Z" fill="#9b9b9b"/>
<path d="M329 552 L329 564.700 L331.800 562.200 L331.800 554.500 Z" fill="#9b9b9b"/><path d="M333.300 552 L333.300 564.700 L340.800 558.300 Z" fill="#9b9b9b"/>
<path d="M356.500 562 L353.500 562 L353.500 551.800 L362 551.800" fill="none" stroke="#4d4d4d" stroke-width="1.200"/><rect x="353" y="551" width="8" height="1.800" fill="#3f78bd"/><rect x="358.500" y="558.500" width="10" height="8" fill="#fff" stroke="#4d4d4d" stroke-width="1.300"/><path d="M368.500 554 L362.500 554 M364.800 551.800 L362.300 554 L364.800 556.300" fill="none" stroke="#2f9b78" stroke-width="1.400"/>
<rect x="379.500" y="552" width="10" height="8" fill="#f4f4f4" stroke="#bdbdbd" stroke-width="1.200"/><rect x="385" y="558" width="9.500" height="8" fill="#fff" stroke="#bdbdbd" stroke-width="1.200"/><rect x="385" y="557.400" width="9.500" height="1.800" fill="#aac0e0"/><path d="M379.500 563.500 L384 563.500 M382 561.500 L384.200 563.500 L382 565.500" fill="none" stroke="#a5d2c0" stroke-width="1.300"/>
<rect x="418.300" y="552.500" width="10.400" height="12.600" fill="#fff" stroke="#747474" stroke-width="1.200"/><path d="M420.500 555.800 L426.500 555.800 M420.500 558.800 L426.500 558.800 M420.500 561.800 L426.500 561.800" stroke="#9a9a9a" stroke-width="0.900"/>
<rect x="444.200" y="552" width="9.600" height="8" fill="#fff" stroke="#747474" stroke-width="1.200"/><path d="M446 554.800 L452 554.800 M446 557.400 L452 557.400" stroke="#9a9a9a" stroke-width="0.900"/><rect x="444.200" y="562.300" width="9.600" height="8" fill="#fff" stroke="#747474" stroke-width="1.200"/><path d="M446 565.500 L452 565.500" stroke="#9a9a9a" stroke-width="0.900"/>
<rect x="468.500" y="552.500" width="6" height="12.300" fill="#fff" stroke="#747474" stroke-width="1.100"/><rect x="477" y="552.500" width="6" height="12.300" fill="#fff" stroke="#747474" stroke-width="1.100"/><path d="M470 555.800 L473 555.800 M470 558.800 L473 558.800 M470 561.800 L473 561.800 M478.500 555.800 L481.500 555.800 M478.500 558.800 L481.500 558.800 M478.500 561.800 L481.500 561.800" stroke="#9a9a9a" stroke-width="0.900"/>
<path d="M494 551.500 L500 551.500 L500 560 L494 560 M509.500 551.500 L503.500 551.500 L503.500 560 L509.500 560 M494 563.500 L500 563.500 L500 569 M509.500 563.500 L503.500 563.500 L503.500 569" fill="none" stroke="#747474" stroke-width="1.100"/><path d="M494 554.500 L498.500 554.500 M494 557.300 L498.500 557.300 M505 554.500 L509.500 554.500 M505 557.300 L509.500 557.300 M494 566.500 L498.500 566.500 M505 566.500 L509.500 566.500" stroke="#9a9a9a" stroke-width="0.900"/>
<circle cx="610.500" cy="557.400" r="7" fill="#fdfdfd" stroke="#333" stroke-width="1"/><path d="M606.500 557.400 L614.500 557.400" stroke="#333" stroke-width="1.100"/>
<path d="M625 558.300 L715 558.300" stroke="#222" stroke-width="1.100"/><rect x="638" y="554" width="4" height="7.500" fill="#222"/><path d="M670 554 L670 562" stroke="#222" stroke-width="1"/>
<circle cx="728" cy="557.200" r="7.200" fill="#fdfdfd" stroke="#333" stroke-width="1"/><path d="M723.700 557.200 L732.300 557.200 M728 552.900 L728 561.500" stroke="#333" stroke-width="1.100"/>
<path d="M742 566 L756 552 M746 567 L756 557 M750 568 L756 562" stroke="#8a8a8a" stroke-width="1"/></svg><!--ICONS_END-->


</body></html>
